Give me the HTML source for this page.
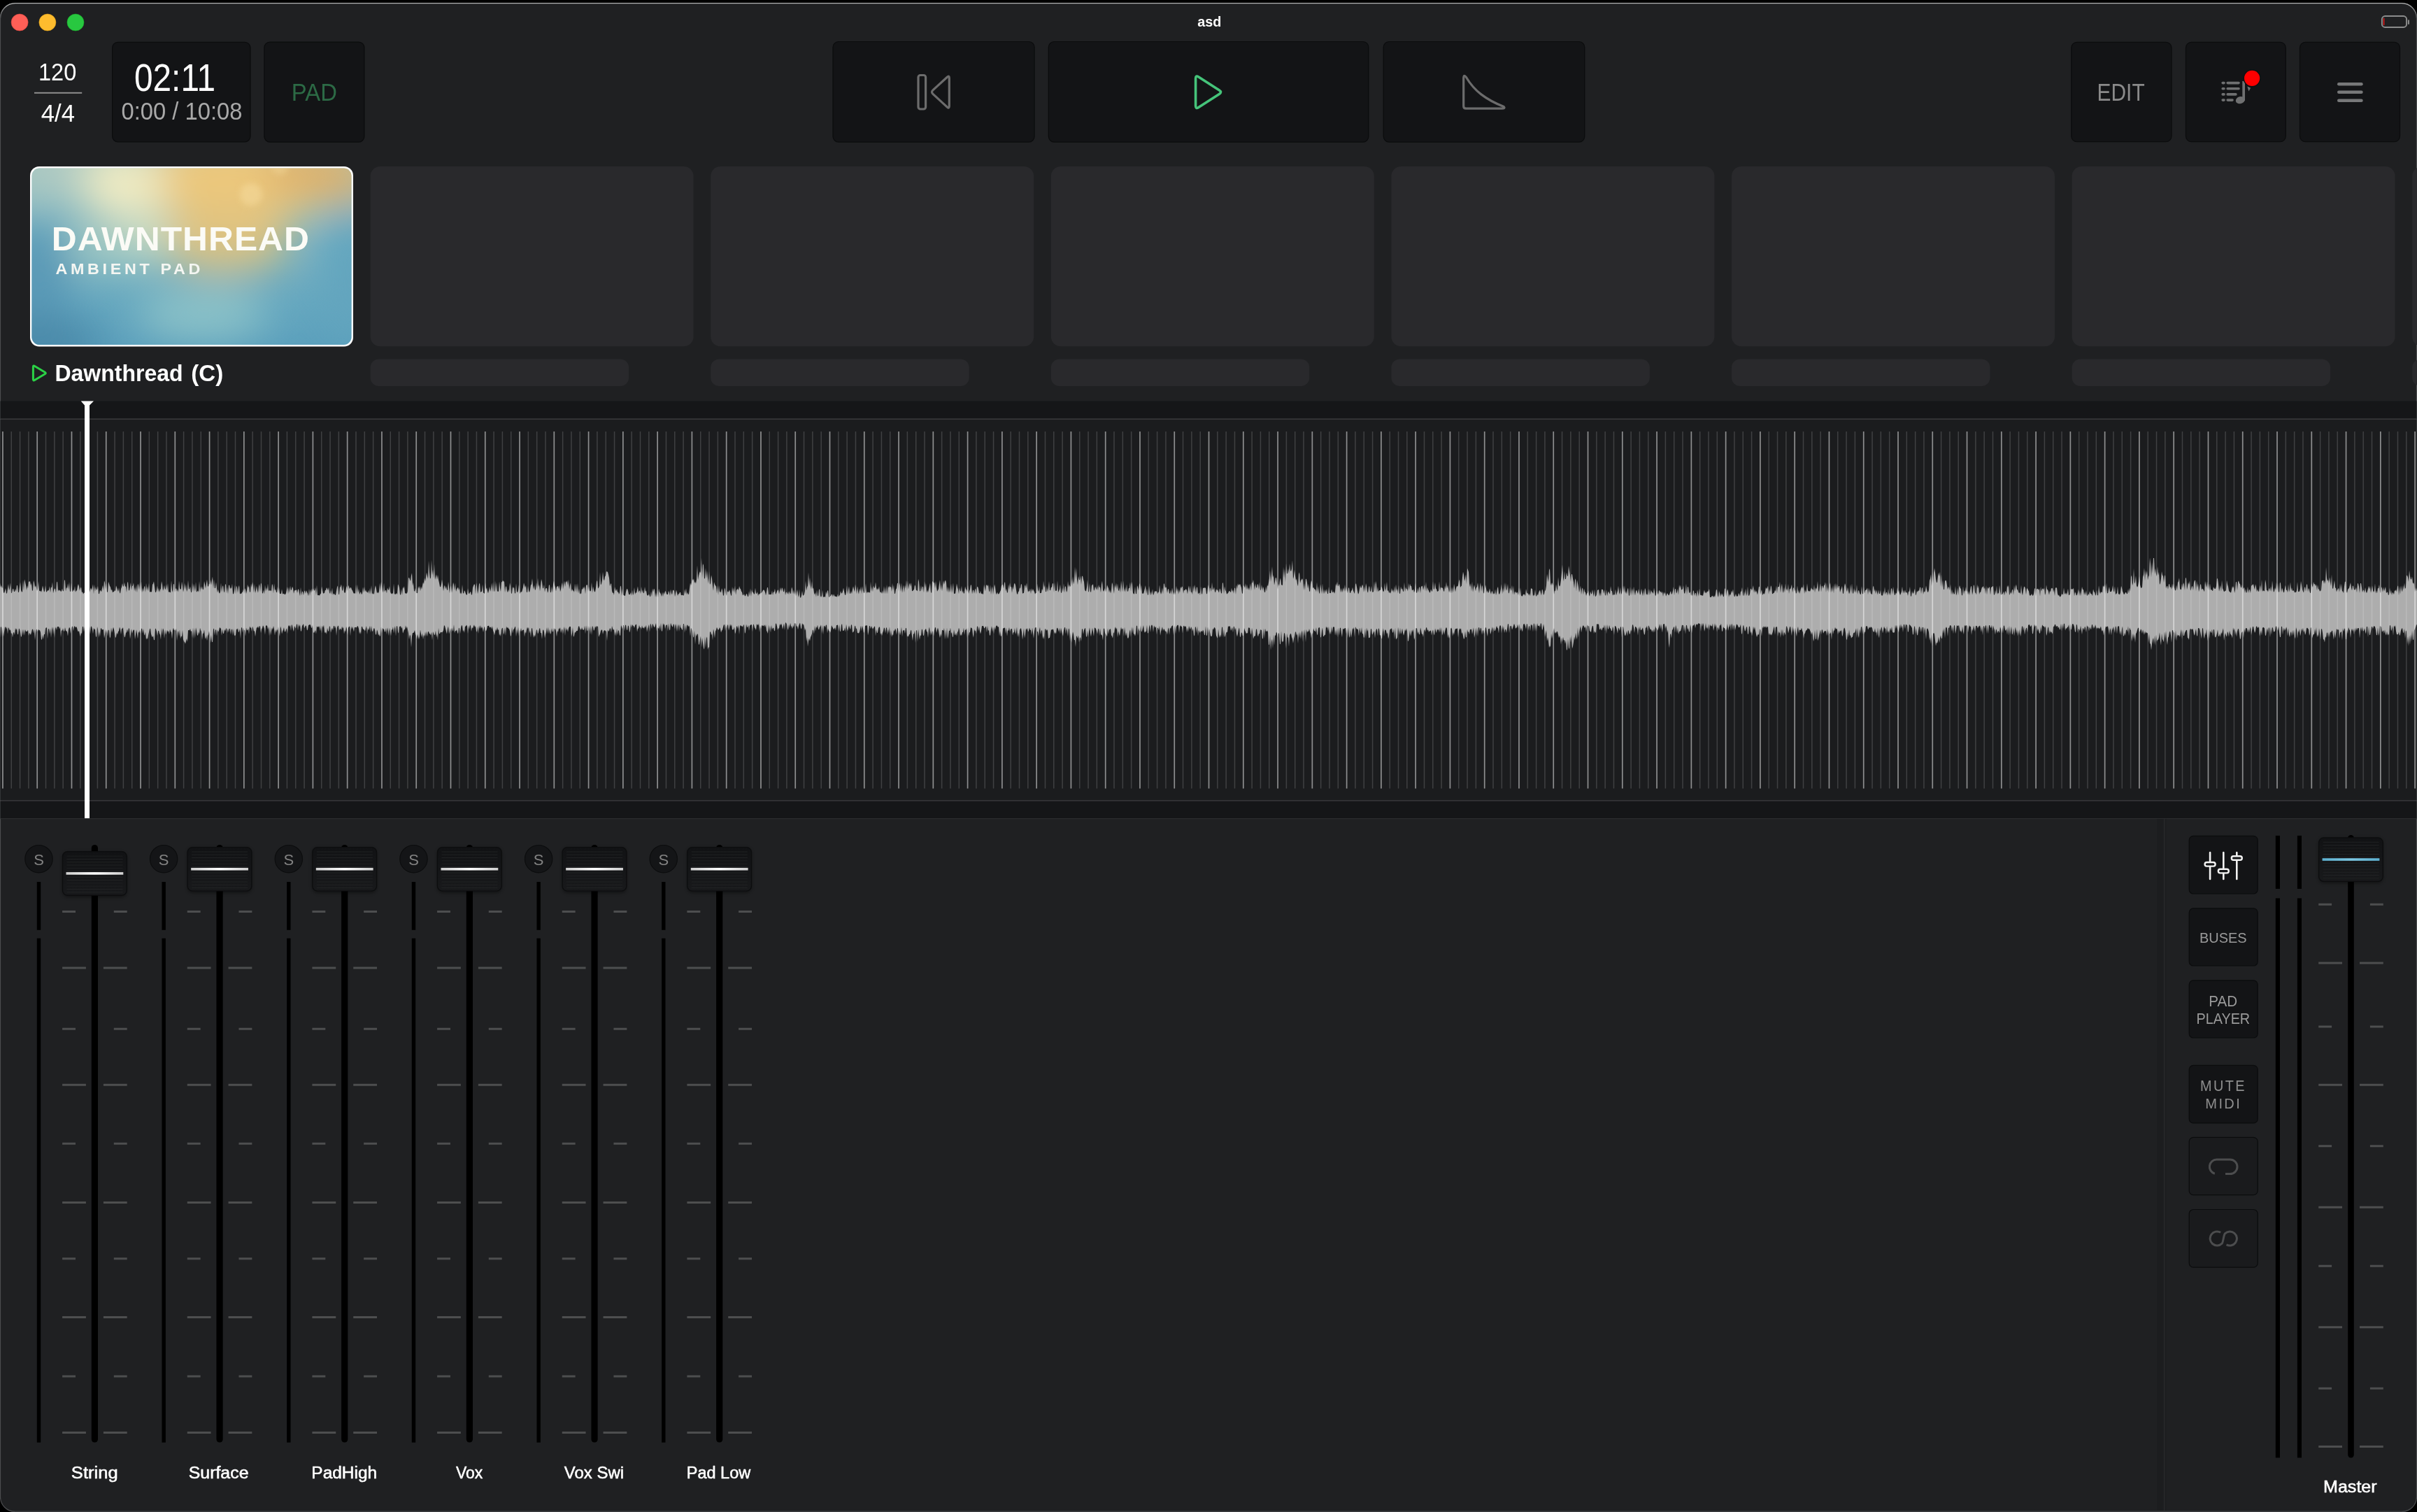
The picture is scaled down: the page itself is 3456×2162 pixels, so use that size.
<!DOCTYPE html><html><head><meta charset="utf-8"><title>asd</title><style>html,body{margin:0;padding:0;background:#000;overflow:hidden;width:3456px;height:2162px}text{font-family:"Liberation Sans",sans-serif}</style></head><body><svg width="3456" height="2162" viewBox="0 0 3456 2162" font-family="Liberation Sans, sans-serif" style="display:block;opacity:0.999"><defs><linearGradient id="edgeg" x1="0" y1="0" x2="0" y2="1"><stop offset="0" stop-color="#b2b3b3"/><stop offset="1" stop-color="#4b4c4e"/></linearGradient><clipPath id="artclip"><rect x="45.5" y="240.5" width="457" height="252.5" rx="11"/></clipPath><filter id="blur30" x="-50%" y="-50%" width="200%" height="200%"><feGaussianBlur stdDeviation="28"/></filter><filter id="blur15" x="-50%" y="-50%" width="200%" height="200%"><feGaussianBlur stdDeviation="14"/></filter><filter id="blur4" x="-50%" y="-50%" width="200%" height="200%"><feGaussianBlur stdDeviation="4"/></filter><filter id="soft" x="-5%" y="-20%" width="110%" height="140%"><feGaussianBlur stdDeviation="0.45"/></filter><linearGradient id="artbase" x1="0" y1="0" x2="0" y2="1"><stop offset="0" stop-color="#a4c6c2"/><stop offset="0.45" stop-color="#72b0c2"/><stop offset="1" stop-color="#5a9fbc"/></linearGradient><linearGradient id="knobg" x1="0" y1="0" x2="0" y2="1"><stop offset="0" stop-color="#111214"/><stop offset="1" stop-color="#18191b"/></linearGradient><filter id="kshadow" x="-20%" y="-30%" width="140%" height="160%"><feGaussianBlur stdDeviation="2.5"/></filter><linearGradient id="wline" x1="0" y1="0" x2="1" y2="0"><stop offset="0" stop-color="#d0d0d0"/><stop offset="0.5" stop-color="#ffffff"/><stop offset="1" stop-color="#d0d0d0"/></linearGradient><linearGradient id="bline" x1="0" y1="0" x2="1" y2="0"><stop offset="0" stop-color="#5cb0d0"/><stop offset="0.5" stop-color="#7cc8e4"/><stop offset="1" stop-color="#5cb0d0"/></linearGradient></defs><rect x="0" y="0" width="3456" height="2162" fill="#000000" />
<rect x="0.5" y="4.5" width="3455" height="2156.9" rx="21" fill="#1f2022" stroke="#4b4c4e" stroke-width="1.2" />
<path d="M0.6 26 A21.4 21.4 0 0 1 22 4.6 H3434 A21.4 21.4 0 0 1 3455.4 26" fill="none" stroke="url(#edgeg)" stroke-width="1.2"/>
<line x1="21" y1="2161.4" x2="3435" y2="2161.4" stroke="#3c3d3f" stroke-width="1.2"/>
<circle cx="28.1" cy="32" r="12" fill="#ff5f57" stroke="#e2463f" stroke-width="0.6"/>
<circle cx="67.9" cy="32" r="12" fill="#febc2e" stroke="#e1a116" stroke-width="0.6"/>
<circle cx="108" cy="32" r="12" fill="#28c840" stroke="#1aab29" stroke-width="0.6"/>
<text transform="translate(1712.2 37.8) scale(1.0148 1)" font-size="19.59" font-weight="bold" fill="#ffffff" >asd</text>
<rect x="3405.9" y="23.1" width="35.2" height="15.8" rx="4.5" fill="none" stroke="#8b8c8c" stroke-width="2"/>
<rect x="3443" y="28.3" width="2" height="6.8" rx="1" fill="#8b8c8c" />
<rect x="3407.9" y="26.1" width="1.4" height="9.9" rx="0.5" fill="#ff1a1a" />
<text transform="translate(54.96 115.4) scale(0.9259 1)" font-size="35.14" font-weight="normal" fill="#ffffff" >120</text>
<rect x="49" y="131.8" width="68.2" height="2" fill="#8e8e8e" />
<text transform="translate(58.81 173.8) scale(0.9874 1)" font-size="35.14" font-weight="normal" fill="#ffffff" >4/4</text>
<rect x="160.6" y="60.3" width="197.4" height="142.5" rx="8" fill="#131416" stroke="#0b0c0d" stroke-width="1.2" />
<text transform="translate(191.99 129.5) scale(0.8642 1)" font-size="55.29" font-weight="normal" fill="#ffffff" >02:11</text>
<text transform="translate(173.59 171) scale(0.9541 1)" font-size="34.29" font-weight="normal" fill="#a9a9a9" >0:00 / 10:08</text>
<rect x="377.9" y="60.1" width="143" height="143" rx="8" fill="#131416" stroke="#0b0c0d" stroke-width="1.2" />
<text transform="translate(416.87 144) scale(0.9439 1)" font-size="34.78" font-weight="normal" fill="#2c6a45" >PAD</text>
<rect x="1191" y="59.5" width="288.1" height="143.6" rx="8" fill="#131416" stroke="#0b0c0d" stroke-width="1.2" />
<rect x="1499.3" y="59.5" width="457.6" height="143.6" rx="8" fill="#131416" stroke="#0b0c0d" stroke-width="1.2" />
<rect x="1978.2" y="59.5" width="287.6" height="143.6" rx="8" fill="#131416" stroke="#0b0c0d" stroke-width="1.2" />
<rect x="1313" y="107.5" width="10.6" height="48.5" rx="3" fill="none" stroke="#6c6c6c" stroke-width="3.2"/>
<path d="M1357.3 111.6Q1357.3 107.6 1354.35 110.3L1333.95 128.9Q1331 131.6 1333.94 134.31L1354.36 153.09Q1357.3 155.8 1357.3 151.8Z" fill="none" stroke="#6c6c6c" stroke-width="3.2" stroke-linejoin="round"/>
<path d="M1713.8 109.92Q1709.6 107.2 1709.6 112.2L1709.6 151.3Q1709.6 156.3 1713.8 153.59L1743.4 134.51Q1747.6 131.8 1743.4 129.08Z" fill="none" stroke="#45c47a" stroke-width="3.6" stroke-linejoin="round"/>
<path d="M2092.7 112 L2092.7 151.8 Q2092.7 155.2 2096 155.2 L2147.5 155.2 Q2152.6 155.2 2150.2 152.6 C2124 142 2108 130 2096.5 110.5 Q2092.7 105.5 2092.7 112 Z" fill="none" stroke="#6c6c6c" stroke-width="3.2" stroke-linejoin="round"/>
<rect x="2961.8" y="60.3" width="143.2" height="142.4" rx="8" fill="#131416" stroke="#0b0c0d" stroke-width="1.2" />
<rect x="3125.5" y="60.3" width="142.8" height="142.4" rx="8" fill="#131416" stroke="#0b0c0d" stroke-width="1.2" />
<rect x="3288.5" y="60.3" width="143" height="142.4" rx="8" fill="#131416" stroke="#0b0c0d" stroke-width="1.2" />
<text transform="translate(2998.61 144.1) scale(0.8417 1)" font-size="35.51" font-weight="normal" fill="#8a8a8a" >EDIT</text>
<line x1="3178.2" y1="118.6" x2="3180" y2="118.6" stroke="#6f7071" stroke-width="3.6" stroke-linecap="round"/>
<line x1="3185.2" y1="118.6" x2="3201" y2="118.6" stroke="#6f7071" stroke-width="3.6" stroke-linecap="round"/>
<line x1="3178.2" y1="126.8" x2="3180" y2="126.8" stroke="#6f7071" stroke-width="3.6" stroke-linecap="round"/>
<line x1="3185.2" y1="126.8" x2="3201" y2="126.8" stroke="#6f7071" stroke-width="3.6" stroke-linecap="round"/>
<line x1="3178.2" y1="134.9" x2="3180" y2="134.9" stroke="#6f7071" stroke-width="3.6" stroke-linecap="round"/>
<line x1="3185.2" y1="134.9" x2="3196.9" y2="134.9" stroke="#6f7071" stroke-width="3.6" stroke-linecap="round"/>
<line x1="3178.2" y1="143.1" x2="3180" y2="143.1" stroke="#6f7071" stroke-width="3.6" stroke-linecap="round"/>
<line x1="3185.2" y1="143.1" x2="3192" y2="143.1" stroke="#6f7071" stroke-width="3.6" stroke-linecap="round"/>
<rect x="3206.3" y="116" width="3.7" height="28" fill="#6f7071"/>
<ellipse cx="3203.3" cy="143.2" rx="6.6" ry="5" transform="rotate(-15 3203.3 143.2)" fill="#6f7071"/>
<path d="M3213.3 123.6 L3218.2 125.8 L3215.4 130.6 Z" fill="#6f7071"/>
<circle cx="3220.1" cy="111.8" r="12.6" fill="#0f1012"/>
<circle cx="3220.1" cy="111.8" r="11.1" fill="#ff0000"/>
<line x1="3344.3" y1="120.2" x2="3376.4" y2="120.2" stroke="#777879" stroke-width="4.6" stroke-linecap="round"/>
<line x1="3344.3" y1="131.7" x2="3376.4" y2="131.7" stroke="#777879" stroke-width="4.6" stroke-linecap="round"/>
<line x1="3344.3" y1="143.7" x2="3376.4" y2="143.7" stroke="#777879" stroke-width="4.6" stroke-linecap="round"/>
<rect x="43" y="238" width="462" height="257.5" rx="13" fill="#ffffff"/>
<g clip-path="url(#artclip)">
<rect x="40" y="235" width="470" height="265" fill="url(#artbase)"/>
<g filter="url(#blur30)">
<ellipse cx="340" cy="255" rx="150" ry="62" fill="#ecc77c"/>
<ellipse cx="450" cy="248" rx="70" ry="42" fill="#dfb26c"/>
<ellipse cx="505" cy="255" rx="30" ry="35" fill="#d8b06e"/>
<ellipse cx="320" cy="345" rx="95" ry="45" fill="#dcc282"/>
<ellipse cx="165" cy="352" rx="70" ry="32" fill="#a6cac2"/>
<ellipse cx="175" cy="262" rx="62" ry="50" fill="#f0ebc2"/>
<ellipse cx="215" cy="335" rx="30" ry="40" fill="#c8dcc4"/>
<ellipse cx="62" cy="248" rx="45" ry="30" fill="#b0cac2"/>
<ellipse cx="55" cy="395" rx="45" ry="75" fill="#5898b6"/>
<ellipse cx="505" cy="390" rx="38" ry="95" fill="#62a4be"/>
<ellipse cx="60" cy="492" rx="85" ry="38" fill="#4a88a8"/>
<ellipse cx="290" cy="448" rx="95" ry="38" fill="#8cc2c8"/>
</g>
<circle cx="359" cy="278" r="16" fill="#f6dc9e" opacity="0.55" filter="url(#blur4)"/>
<circle cx="400" cy="238" r="12" fill="#f6dc9e" opacity="0.4" filter="url(#blur4)"/>
</g>
<text transform="translate(73.77 357.6) scale(1.0400 1)" font-size="47.83" font-weight="bold" fill="#fbfbf6" letter-spacing="0.96" filter="url(#soft)">DAWNTHREAD</text>
<text transform="translate(79.42 392.1) scale(1.0316 1)" font-size="22.61" font-weight="bold" fill="#f4f6f2" letter-spacing="4.52" filter="url(#soft)">AMBIENT PAD</text>
<rect x="529.6" y="238" width="462" height="257.3" rx="14" fill="#29292c" />
<rect x="529.6" y="513.6" width="369.5" height="38.4" rx="12" fill="#29292c" />
<rect x="1016.2" y="238" width="462" height="257.3" rx="14" fill="#29292c" />
<rect x="1016.2" y="513.6" width="369.5" height="38.4" rx="12" fill="#29292c" />
<rect x="1502.8" y="238" width="462" height="257.3" rx="14" fill="#29292c" />
<rect x="1502.8" y="513.6" width="369.5" height="38.4" rx="12" fill="#29292c" />
<rect x="1989.4" y="238" width="462" height="257.3" rx="14" fill="#29292c" />
<rect x="1989.4" y="513.6" width="369.5" height="38.4" rx="12" fill="#29292c" />
<rect x="2476" y="238" width="462" height="257.3" rx="14" fill="#29292c" />
<rect x="2476" y="513.6" width="369.5" height="38.4" rx="12" fill="#29292c" />
<rect x="2962.6" y="238" width="462" height="257.3" rx="14" fill="#29292c" />
<rect x="2962.6" y="513.6" width="369.5" height="38.4" rx="12" fill="#29292c" />
<rect x="3449.2" y="238" width="462" height="257.3" rx="14" fill="#29292c" />
<rect x="3449.2" y="513.6" width="369.5" height="38.4" rx="12" fill="#29292c" />
<path d="M49.55 523.48Q47.4 522.2 47.4 524.7L47.4 542.3Q47.4 544.8 49.55 543.52L64.25 534.78Q66.4 533.5 64.25 532.22Z" fill="none" stroke="#2bd146" stroke-width="3" stroke-linejoin="round"/>
<text transform="translate(78.42 545) scale(0.9481 1)" font-size="33.79" font-weight="bold" fill="#ffffff" >Dawnthread</text>
<text transform="translate(273.24 545) scale(0.9795 1)" font-size="33.79" font-weight="bold" fill="#ffffff" >(C)</text>
<rect x="0.5" y="573.5" width="3455" height="25.5" fill="#151618" />
<rect x="0.5" y="598.6" width="3455" height="1.2" fill="#4a4b4c" />
<rect x="0.5" y="599.8" width="3455" height="544.6" fill="#1b1c1e" />
<path d="M0 833.43L0 833.43L1 839.95L2 836.66L3 840.95L4 839.49L5 846.76L6 848.24L7 844.93L8 841.12L9 848.42L10 848.59L11 841.84L12 835.01L13 844.25L14 841.1L15 833.15L16 848.28L17 847.53L18 842.49L19 841.45L20 846.03L21 846.03L22 841.77L23 846.02L24 836.79L25 837.15L26 847.01L27 846.83L28 839.24L29 832.24L30 843.8L31 846.59L32 846.34L33 829.24L34 844.55L35 828.2L36 832.29L37 836.99L38 843.92L39 836.98L40 841.46L41 831.33L42 831.98L43 830.64L44 837.14L45 833.59L46 845.01L47 844.01L48 829.69L49 833.29L50 839.99L51 836.95L52 840.31L53 845.03L54 842.21L55 831.03L56 844.3L57 845.52L58 844.85L59 846.73L60 843.28L61 837.21L62 841.87L63 846.82L64 845.08L65 837.05L66 846.46L67 846.27L68 844.03L69 844.74L70 843.17L71 837.97L72 847.53L73 839.56L74 840.22L75 832.23L76 848.27L77 844.22L78 841.61L79 841.98L80 847.48L81 832.85L82 831.52L83 845.4L84 842.91L85 844.76L86 843.81L87 846.26L88 844.95L89 841.56L90 845.42L91 845.1L92 828.76L93 830.5L94 845.42L95 839.41L96 841.52L97 834.21L98 842.89L99 832.05L100 845.55L101 846L102 833.27L103 846.19L104 845.25L105 842.82L106 845.82L107 838.06L108 846.85L109 844.85L110 844.35L111 838.11L112 834.93L113 838.4L114 844.75L115 840.98L116 839.58L117 847.53L118 846.09L119 849.43L120 847.78L121 847.54L122 839.26L123 849.72L124 849.21L125 837.2L126 842.51L127 845.69L128 847.11L129 843.04L130 840.2L131 844.02L132 840.56L133 835.32L134 849.28L135 835.81L136 845.51L137 839.12L138 843.72L139 842.44L140 837.66L141 849.14L142 849.04L143 843.68L144 844.86L145 846.18L146 841.2L147 836.72L148 844.2L149 829.9L150 833.19L151 842.75L152 833.35L153 846.79L154 846.52L155 831.87L156 834.86L157 837.91L158 839.56L159 844.41L160 842.41L161 847.38L162 846.04L163 846.3L164 843.95L165 845.32L166 837.28L167 840.09L168 843.19L169 845.97L170 840.27L171 846.91L172 848.73L173 842.02L174 839.17L175 833.94L176 838.92L177 837.96L178 832.82L179 839.18L180 837.92L181 846.95L182 833.83L183 831.61L184 844.2L185 844.16L186 839.12L187 832.83L188 843.98L189 838.08L190 837.42L191 833.14L192 845L193 839.37L194 846.61L195 836.09L196 847.42L197 834.54L198 837.06L199 843.2L200 832.73L201 845.42L202 830.96L203 847.53L204 840.47L205 846.29L206 839.67L207 837.51L208 847.11L209 833.87L210 844.36L211 838.3L212 845.47L213 833.52L214 846.67L215 846.19L216 846.23L217 846.62L218 836.07L219 834.41L220 831.24L221 838.64L222 846.67L223 846.93L224 843.44L225 837.49L226 846.87L227 840.47L228 846.67L229 843.55L230 841.47L231 830.98L232 835.81L233 844.8L234 841.86L235 836.42L236 843.56L237 841.54L238 835.22L239 844.88L240 833.75L241 847.28L242 845.65L243 847.17L244 847.03L245 830.11L246 843.57L247 847.07L248 834.72L249 835.79L250 847.35L251 842.22L252 841.08L253 845.67L254 842.31L255 846.78L256 830.31L257 840.89L258 842.89L259 842.12L260 831.45L261 838.04L262 846.81L263 842.45L264 833.54L265 843.13L266 835.46L267 846.25L268 842.65L269 829.51L270 842.86L271 842.11L272 838.23L273 846.54L274 847.36L275 832.87L276 846.43L277 834.79L278 840.07L279 846.06L280 832.01L281 846.64L282 845.7L283 844.16L284 846.85L285 830.64L286 847.04L287 838.24L288 843.01L289 838.3L290 843.45L291 842.18L292 831.01L293 835.73L294 841.23L295 834.5L296 828.66L297 838.55L298 838.44L299 834.36L300 835.88L301 828.44L302 836.63L303 829.88L304 824.6L305 841.75L306 828.62L307 841.36L308 840.66L309 832.13L310 841.36L311 847.62L312 843.05L313 847.35L314 848.65L315 845.93L316 833.23L317 847L318 838.91L319 836.92L320 845.56L321 847.47L322 835.86L323 835.37L324 848.58L325 839.11L326 849.29L327 837.26L328 836.17L329 842.34L330 839.7L331 841.98L332 834.46L333 849.33L334 849.22L335 844.94L336 836.21L337 849.53L338 837.56L339 839.68L340 847.66L341 839.83L342 836.69L343 849.42L344 848.46L345 849.14L346 847.34L347 846.21L348 842.16L349 849.35L350 841.11L351 843.15L352 848.89L353 844.19L354 835.41L355 840.58L356 837.68L357 846.46L358 846.72L359 834.42L360 840.24L361 832.28L362 836.83L363 847.65L364 834.83L365 847.89L366 844.29L367 837.74L368 844.02L369 847.83L370 838.29L371 834.88L372 846.19L373 833.58L374 835.11L375 848.85L376 848.02L377 843.3L378 849.57L379 836.14L380 845.68L381 839.79L382 844.15L383 834.21L384 845.49L385 843.41L386 845.35L387 843.77L388 845.8L389 834.83L390 837.32L391 848.4L392 834.02L393 844.51L394 842.17L395 846.81L396 847.18L397 838.43L398 848.5L399 840.02L400 848.91L401 848.79L402 849.22L403 842.18L404 848.96L405 849.56L406 848.41L407 850.18L408 849.95L409 847.95L410 843.32L411 838.71L412 849.17L413 839.15L414 847.76L415 837.39L416 844.31L417 843.12L418 838.8L419 840.96L420 848.67L421 844.72L422 843.81L423 844.3L424 842.79L425 848.09L426 843.06L427 842.21L428 847.65L429 852.36L430 839.47L431 851.46L432 845.87L433 845.99L434 851.14L435 845.79L436 844.18L437 849.1L438 844.13L439 846.45L440 848.65L441 852.24L442 841.4L443 851.99L444 842.49L445 847.65L446 841.32L447 846.34L448 841.12L449 844.33L450 844.42L451 839.63L452 851.23L453 836.47L454 851.13L455 851L456 851.14L457 851.54L458 849.47L459 848.45L460 838.16L461 843.76L462 848.49L463 848.45L464 847.82L465 843.82L466 843.95L467 840.1L468 841.65L469 844.17L470 839.6L471 847.62L472 849.12L473 843.51L474 850.46L475 840.19L476 851.1L477 848.46L478 849.33L479 850.64L480 850.83L481 845.28L482 839.53L483 837.2L484 849.85L485 850.23L486 840.02L487 838.65L488 835.54L489 843.38L490 844.95L491 836.71L492 846.34L493 848.29L494 846.86L495 840.76L496 837.72L497 845.32L498 836.55L499 838.93L500 842.26L501 840.02L502 840.32L503 842.94L504 844.38L505 846.99L506 849.08L507 847.81L508 849.34L509 835.52L510 849.63L511 835.62L512 847.39L513 841.8L514 850.01L515 847.82L516 846.1L517 850.36L518 848.45L519 839.18L520 847.71L521 838.67L522 846.19L523 843.36L524 846.51L525 846.28L526 848.08L527 843.41L528 849.39L529 840.7L530 849.79L531 836.67L532 849.82L533 847.88L534 849.85L535 848.95L536 840.71L537 836.99L538 841.88L539 848.32L540 846.57L541 848.61L542 845.58L543 833.61L544 845.04L545 831.87L546 837.98L547 843.7L548 847.5L549 833.32L550 846.62L551 844.04L552 843.82L553 848.62L554 840.16L555 843.39L556 843.46L557 838.06L558 846.38L559 848.55L560 849.47L561 847.7L562 849.76L563 834.32L564 848.72L565 850.19L566 849.25L567 848.05L568 850.36L569 835.25L570 837.19L571 840.38L572 849.96L573 850.71L574 841.91L575 850.99L576 839.3L577 841.87L578 837.92L579 847.7L580 848.71L581 848.38L582 848.6L583 845.53L584 826.74L585 825.66L586 828.68L587 831.03L588 823.33L589 819.25L590 837.79L591 832.74L592 844.95L593 845.79L594 840.65L595 847.67L596 848.03L597 848.26L598 838.31L599 841.8L600 837.79L601 845.24L602 838.58L603 842.71L604 837.84L605 832.31L606 835.31L607 826.04L608 831.6L609 825.96L610 818.58L611 823.19L612 827.85L613 801.67L614 818.03L615 827.74L616 825.96L617 800.52L618 822.28L619 814.26L620 826.91L621 806.18L622 828.93L623 824.94L624 821.23L625 828.86L626 822.12L627 829.01L628 833.58L629 838.71L630 839.38L631 835.49L632 828.54L633 835.49L634 845.14L635 839.08L636 836.6L637 842.5L638 838.08L639 843.36L640 843.9L641 831.82L642 838.69L643 848.27L644 840.02L645 836.94L646 847.78L647 840.75L648 832.72L649 836.06L650 844.33L651 833.27L652 845.89L653 842.79L654 840.88L655 839.44L656 843.93L657 841.02L658 849.42L659 847.11L660 849.76L661 835.85L662 847.88L663 848.71L664 844.14L665 845.87L666 848.97L667 850.87L668 850.26L669 841.12L670 848.3L671 849.14L672 846.71L673 845.98L674 850.41L675 850.42L676 840.37L677 837.51L678 835.28L679 836.09L680 849.43L681 833.06L682 838.99L683 849.14L684 844.35L685 835.28L686 833.59L687 847.37L688 845.94L689 845.81L690 835.62L691 847.55L692 848.08L693 849.12L694 832.97L695 843.21L696 839.99L697 845.23L698 848.33L699 844.09L700 838.64L701 845.99L702 841.78L703 833.45L704 846.87L705 831.91L706 844.28L707 846.57L708 830.06L709 846.39L710 832.62L711 844.98L712 846.27L713 845.33L714 831.18L715 840.78L716 846.04L717 832.47L718 832.12L719 829.74L720 831.56L721 831.54L722 847.36L723 838.87L724 838.53L725 844.92L726 847.24L727 842.46L728 846.47L729 833.13L730 838.09L731 848.8L732 848.56L733 838.75L734 841.47L735 839.31L736 848L737 848.73L738 834.02L739 846.23L740 847.17L741 844.01L742 835.79L743 849.19L744 847.8L745 846L746 846.68L747 843.48L748 839.87L749 833.36L750 836.97L751 840.48L752 836.47L753 846.78L754 846.89L755 837.8L756 845.23L757 846.9L758 843.09L759 836.41L760 835.39L761 827.1L762 837.46L763 842.65L764 836.28L765 844.14L766 842.22L767 832.83L768 842.56L769 826.15L770 839.31L771 835.51L772 845.24L773 837.83L774 827.99L775 831.98L776 840.67L777 841.5L778 835.65L779 846.86L780 841.41L781 841.28L782 840.96L783 847.63L784 845.23L785 835.95L786 837.05L787 847.47L788 846.55L789 838.15L790 847.81L791 835.59L792 830.28L793 836.62L794 839.78L795 845.41L796 838.83L797 838.73L798 837.51L799 842.21L800 836.45L801 846.27L802 842.67L803 836.7L804 832.64L805 842.61L806 836.01L807 830.58L808 839.24L809 831L810 833.05L811 829.7L812 836.88L813 828.52L814 842.72L815 837.06L816 833.24L817 846.04L818 841.68L819 844.49L820 844.38L821 846.89L822 834.28L823 846.49L824 834.36L825 847.44L826 833.66L827 848.51L828 841.66L829 849.63L830 847.94L831 849.68L832 841.42L833 843.2L834 838.91L835 842.01L836 837.99L837 849.23L838 837.54L839 835.99L840 836.78L841 845.99L842 838.62L843 844.29L844 845.83L845 844.16L846 832.53L847 847.73L848 838.42L849 843.3L850 846.08L851 846.56L852 840.78L853 831.71L854 829.8L855 841.5L856 840.43L857 837.78L858 818.09L859 836.54L860 834.71L861 829.67L862 817.78L863 828.02L864 830.46L865 824.5L866 823.37L867 817.21L868 817.17L869 818.01L870 821.69L871 826.52L872 838.13L873 835.31L874 834.11L875 845L876 848.1L877 847.47L878 851.08L879 838.97L880 843.5L881 845.16L882 841.7L883 847.08L884 846.25L885 849.75L886 847.4L887 837.61L888 838.85L889 852.02L890 841.76L891 850.79L892 850.96L893 851.97L894 851.68L895 846.29L896 842.5L897 841.76L898 844.76L899 849.73L900 850.24L901 849.78L902 846.82L903 852.04L904 843.51L905 851.27L906 848.48L907 839.65L908 850.16L909 846.79L910 848.16L911 843.54L912 838.13L913 847.45L914 844.56L915 844.68L916 849.28L917 838.69L918 847.87L919 843.2L920 848.57L921 847.39L922 839.01L923 846.02L924 844.17L925 850.61L926 851.81L927 851.13L928 849.17L929 852.45L930 853.46L931 845.53L932 852.95L933 841.37L934 846.73L935 841.42L936 843.61L937 853.94L938 847.14L939 854.15L940 843.01L941 854.13L942 841.47L943 846.52L944 847.78L945 849.66L946 853.32L947 846.23L948 853.2L949 846.58L950 849.91L951 845.17L952 845.87L953 849.61L954 850.02L955 850.03L956 844.8L957 847.17L958 851.75L959 842.38L960 848.09L961 850.41L962 844.1L963 843.57L964 845.29L965 853.43L966 848.9L967 843.44L968 847.34L969 852.05L970 849.23L971 849.36L972 846.74L973 846.89L974 851.28L975 851.09L976 850.81L977 851.66L978 851.12L979 842.13L980 849.51L981 840.96L982 850.59L983 846.73L984 849.67L985 849.64L986 841.87L987 833.17L988 837.33L989 833.13L990 827.65L991 830.23L992 827.37L993 834.11L994 831.41L995 834.61L996 828.75L997 808.18L998 829.36L999 823.59L1000 819.38L1001 816.7L1002 819.66L1003 797.44L1004 826.5L1005 806.02L1006 808.23L1007 827.32L1008 827.24L1009 811.89L1010 827.41L1011 815.8L1012 826.85L1013 834.69L1014 816.47L1015 836.1L1016 833.97L1017 822.13L1018 826.95L1019 837.62L1020 844.74L1021 832.17L1022 835.62L1023 837.2L1024 838.83L1025 848.56L1026 836.83L1027 851.01L1028 836.75L1029 847.14L1030 845.23L1031 847.84L1032 840.89L1033 844.31L1034 851.79L1035 851.21L1036 840.16L1037 842.99L1038 849.73L1039 852.11L1040 844.95L1041 846.78L1042 845.71L1043 843.29L1044 846.87L1045 850.82L1046 852.17L1047 838.8L1048 846.27L1049 840.18L1050 847.91L1051 837.33L1052 850.63L1053 843.78L1054 842.65L1055 841.53L1056 844.55L1057 838.08L1058 841.27L1059 842.19L1060 845.59L1061 847L1062 851.45L1063 850.39L1064 849.59L1065 852.24L1066 852.34L1067 849.16L1068 849.24L1069 852.86L1070 853.13L1071 845.35L1072 852.51L1073 841.05L1074 853.09L1075 842.94L1076 846.61L1077 847.32L1078 849.41L1079 849.39L1080 840.52L1081 848.86L1082 848.79L1083 846.08L1084 852.02L1085 848.71L1086 850.17L1087 847.96L1088 848.52L1089 847.61L1090 846.12L1091 844.04L1092 843.32L1093 844.3L1094 846.64L1095 851.17L1096 846.64L1097 839.96L1098 839.95L1099 849.66L1100 850.13L1101 849.75L1102 850.25L1103 849.77L1104 844.59L1105 851.28L1106 846.2L1107 846.73L1108 841.45L1109 849.88L1110 848.35L1111 845.8L1112 843.5L1113 843.46L1114 849.49L1115 844.6L1116 839.74L1117 845.98L1118 840.05L1119 841.72L1120 845.71L1121 846.52L1122 840.29L1123 850.91L1124 846.5L1125 847.09L1126 849.73L1127 845.16L1128 850.56L1129 845.09L1130 848.37L1131 849.23L1132 839.2L1133 842.21L1134 849.56L1135 843.2L1136 850.49L1137 845.76L1138 852.45L1139 847.08L1140 842.77L1141 850.52L1142 854.1L1143 842.36L1144 854.16L1145 854.72L1146 851.56L1147 844.69L1148 851.81L1149 851.3L1150 849.97L1151 845.34L1152 830.49L1153 844.47L1154 839.95L1155 837.35L1156 818.17L1157 838.24L1158 825.8L1159 837.68L1160 842.44L1161 830.75L1162 842.18L1163 840.07L1164 847.98L1165 850.5L1166 846.72L1167 853.81L1168 843.55L1169 851.33L1170 852.69L1171 843.35L1172 842.27L1173 854.24L1174 851.81L1175 854.13L1176 843.53L1177 854.07L1178 853.55L1179 853.06L1180 854.19L1181 845.58L1182 850.03L1183 845.31L1184 843.66L1185 853.58L1186 853.95L1187 852.22L1188 852.35L1189 849.84L1190 849.88L1191 853.39L1192 849.26L1193 851.69L1194 853.01L1195 852.63L1196 853.02L1197 853.74L1198 848.95L1199 853.38L1200 851.67L1201 850.52L1202 845.01L1203 848.16L1204 848.61L1205 845.46L1206 840.62L1207 845.5L1208 850.33L1209 851.27L1210 846.77L1211 837.03L1212 849.99L1213 843.76L1214 838.15L1215 848.43L1216 848.96L1217 845.09L1218 849.21L1219 842.9L1220 838.14L1221 842.79L1222 846.56L1223 835.36L1224 841.65L1225 849.27L1226 838.15L1227 845.59L1228 849.67L1229 841.23L1230 845.65L1231 838.58L1232 849.33L1233 837.91L1234 844.71L1235 847.93L1236 847.96L1237 845.87L1238 834.12L1239 848.76L1240 845.77L1241 847.77L1242 846.46L1243 846.68L1244 847.93L1245 831.51L1246 845.73L1247 838.85L1248 846.36L1249 837.21L1250 840.49L1251 840.61L1252 832.2L1253 840.56L1254 843.98L1255 840.91L1256 843.61L1257 838.31L1258 845.6L1259 847.47L1260 846.38L1261 848.99L1262 844.35L1263 848.92L1264 837.77L1265 849.2L1266 838.96L1267 849.48L1268 835.67L1269 849.42L1270 838L1271 840.69L1272 837.6L1273 839.96L1274 838.64L1275 846.03L1276 833.68L1277 844.19L1278 836.5L1279 848.88L1280 848.81L1281 842.77L1282 841.21L1283 834.12L1284 833.85L1285 846.03L1286 832.97L1287 837.27L1288 846.11L1289 833.32L1290 847.86L1291 841.38L1292 836.15L1293 847.15L1294 836.29L1295 841.65L1296 829.32L1297 844.59L1298 830.14L1299 842.45L1300 836.38L1301 833.14L1302 838.69L1303 832.76L1304 844.95L1305 845.13L1306 843.8L1307 842.91L1308 836.21L1309 837.88L1310 844.36L1311 843.99L1312 845.53L1313 827.83L1314 831.84L1315 844.63L1316 845.78L1317 836.87L1318 845.02L1319 838.43L1320 839.27L1321 847.42L1322 830.67L1323 840.66L1324 833.87L1325 847.74L1326 843.6L1327 847.06L1328 842.25L1329 837.93L1330 833.61L1331 846.5L1332 848.24L1333 831.69L1334 831.3L1335 833.95L1336 832.13L1337 841.46L1338 830.73L1339 839.46L1340 845.7L1341 843.93L1342 842.14L1343 835.28L1344 828.93L1345 843.9L1346 835.54L1347 845.19L1348 837.47L1349 829.95L1350 835.65L1351 831.01L1352 829.49L1353 833.48L1354 846.76L1355 838.32L1356 847.73L1357 839.13L1358 847.54L1359 842.94L1360 834.48L1361 847.97L1362 841.77L1363 833.18L1364 849.18L1365 848.53L1366 849.05L1367 841.8L1368 834.37L1369 839.4L1370 843.12L1371 849.32L1372 840.35L1373 844.8L1374 845.82L1375 837.85L1376 847.81L1377 844.59L1378 849.12L1379 847.74L1380 838.44L1381 842.2L1382 843.5L1383 846.61L1384 836.23L1385 849.09L1386 845.25L1387 842.5L1388 835.95L1389 837.11L1390 849.57L1391 844.33L1392 843.22L1393 848.86L1394 843.46L1395 841.16L1396 849.72L1397 839.21L1398 838.87L1399 841.68L1400 848.06L1401 848.58L1402 844.68L1403 849.53L1404 848.19L1405 849.48L1406 849.76L1407 835.7L1408 840.72L1409 845.41L1410 836.63L1411 836.31L1412 838.6L1413 835.75L1414 844.42L1415 846.65L1416 836.01L1417 850.24L1418 842.24L1419 838.15L1420 850.36L1421 842.55L1422 835.46L1423 839.17L1424 847.65L1425 850.19L1426 846.47L1427 849.17L1428 849.62L1429 848.32L1430 845.89L1431 843.74L1432 837.6L1433 836.21L1434 835.8L1435 841.48L1436 833.97L1437 831.75L1438 845.5L1439 841.43L1440 847.72L1441 846.93L1442 835.4L1443 843.11L1444 833.06L1445 839.62L1446 838.86L1447 847.76L1448 838.21L1449 843.48L1450 834.64L1451 833.89L1452 836.73L1453 843.35L1454 849.12L1455 849.91L1456 846.24L1457 845.49L1458 839.91L1459 841.86L1460 834.96L1461 835.67L1462 848.85L1463 848.35L1464 847.67L1465 838.32L1466 835.93L1467 841.46L1468 833.23L1469 841.54L1470 846.92L1471 844.58L1472 846.02L1473 841.45L1474 849.08L1475 841.03L1476 845.64L1477 841.98L1478 844.61L1479 846.33L1480 849.39L1481 848.09L1482 848.11L1483 834.34L1484 843.4L1485 846.33L1486 837.91L1487 848.15L1488 847.91L1489 847.72L1490 841.42L1491 844.86L1492 830.6L1493 840.4L1494 836.62L1495 846.01L1496 846.19L1497 838.3L1498 846.19L1499 841.19L1500 831.09L1501 844.32L1502 844.07L1503 839.78L1504 839.74L1505 833.98L1506 834.52L1507 846.92L1508 832.31L1509 845.22L1510 844.31L1511 845.08L1512 830.06L1513 847.09L1514 844.96L1515 842.46L1516 835.43L1517 847.19L1518 847.89L1519 840.19L1520 846.77L1521 833.99L1522 847.78L1523 837.88L1524 839.35L1525 847.04L1526 844.47L1527 830.72L1528 840.11L1529 835.61L1530 839.13L1531 837.71L1532 827.04L1533 837.94L1534 824.12L1535 835.54L1536 830.94L1537 810.16L1538 828.44L1539 812.11L1540 828.5L1541 836.35L1542 823.8L1543 829.06L1544 829.48L1545 823.1L1546 836.11L1547 824.06L1548 823.62L1549 828.41L1550 832.01L1551 842.96L1552 845.28L1553 845.15L1554 839.68L1555 828.89L1556 845.85L1557 846.64L1558 833.78L1559 845.43L1560 847.34L1561 837L1562 836.55L1563 835.11L1564 844.65L1565 843.35L1566 838.46L1567 841.19L1568 843.82L1569 838.12L1570 844.58L1571 836.08L1572 840.34L1573 839.36L1574 847.38L1575 835.71L1576 830.52L1577 843.23L1578 845.99L1579 843.92L1580 840.81L1581 846.75L1582 842.88L1583 836.3L1584 838.92L1585 841.36L1586 847.28L1587 842.71L1588 848.5L1589 844.88L1590 832.87L1591 835.48L1592 843.45L1593 848.94L1594 836.22L1595 841.01L1596 833.13L1597 843.38L1598 834.26L1599 843.71L1600 845.37L1601 839.35L1602 847.38L1603 830.24L1604 838.66L1605 846.47L1606 829.93L1607 841.44L1608 846.42L1609 838.91L1610 846.95L1611 835.36L1612 845.42L1613 845.86L1614 840.84L1615 841.23L1616 832.37L1617 845.68L1618 831.82L1619 835.75L1620 847.8L1621 849.27L1622 849.42L1623 838.41L1624 849.12L1625 849.28L1626 837.1L1627 839.57L1628 844.5L1629 835.99L1630 833.83L1631 845.26L1632 836.35L1633 849.2L1634 848.03L1635 849.28L1636 845.57L1637 841.3L1638 837.08L1639 849.02L1640 841.49L1641 851L1642 850.27L1643 837.57L1644 846.12L1645 851.39L1646 844.88L1647 850.65L1648 841.93L1649 851.36L1650 849.04L1651 845.22L1652 845.74L1653 845.31L1654 845.8L1655 849.47L1656 846.09L1657 847.66L1658 836.26L1659 845.85L1660 850.09L1661 846.76L1662 840.26L1663 849.6L1664 833.91L1665 835.14L1666 840.93L1667 839.04L1668 840.79L1669 847.9L1670 842.42L1671 842.08L1672 848.25L1673 848.66L1674 843.25L1675 849.89L1676 840.13L1677 845.69L1678 850.44L1679 846.73L1680 850.79L1681 845.95L1682 837.82L1683 846.42L1684 840.63L1685 849.63L1686 842.92L1687 847.83L1688 838.79L1689 841.84L1690 838.56L1691 839.16L1692 848.76L1693 843.67L1694 844.53L1695 842.7L1696 842.13L1697 844.15L1698 849.61L1699 841.29L1700 837.31L1701 846.86L1702 837.38L1703 847.66L1704 846.01L1705 850.3L1706 837.35L1707 846.02L1708 835.94L1709 840.77L1710 847.55L1711 839.82L1712 839.59L1713 849.44L1714 848.24L1715 847.15L1716 851.15L1717 838.29L1718 848.51L1719 850.01L1720 840.44L1721 841.11L1722 840.43L1723 840.31L1724 840.98L1725 848.74L1726 849.4L1727 839.91L1728 835.73L1729 847.67L1730 839.9L1731 841.65L1732 845.89L1733 832.38L1734 843.83L1735 842.62L1736 839.24L1737 845.8L1738 847.61L1739 841.79L1740 844.71L1741 842.75L1742 845.47L1743 847.61L1744 841.33L1745 843.27L1746 847.96L1747 848.78L1748 832.89L1749 833.92L1750 849.23L1751 838.33L1752 843.63L1753 845.7L1754 849.67L1755 848.65L1756 847.95L1757 845.71L1758 844.84L1759 846.08L1760 847.17L1761 840.54L1762 846.24L1763 843.17L1764 848.69L1765 841.3L1766 840.16L1767 849.89L1768 836L1769 842.05L1770 834.19L1771 836.96L1772 836.28L1773 834.84L1774 837.61L1775 840.42L1776 848.65L1777 848.62L1778 836.81L1779 838L1780 840.64L1781 833.94L1782 843.53L1783 835.55L1784 843.52L1785 839.5L1786 844.34L1787 839.98L1788 833.89L1789 845.05L1790 832.65L1791 833.73L1792 828.98L1793 836.16L1794 843.73L1795 834L1796 839.55L1797 840.9L1798 835.09L1799 836.19L1800 842.74L1801 832.18L1802 844.53L1803 842.99L1804 835.91L1805 844.83L1806 838.83L1807 842L1808 846.66L1809 846.96L1810 838.46L1811 845.7L1812 836.18L1813 838.48L1814 832.83L1815 827.03L1816 815.53L1817 832.05L1818 822.63L1819 810.07L1820 826.01L1821 822.34L1822 836.77L1823 831.66L1824 825.79L1825 826.54L1826 833.49L1827 842.64L1828 834.72L1829 838.1L1830 830.11L1831 826.29L1832 835.7L1833 836.99L1834 836.5L1835 810.47L1836 826.25L1837 812.68L1838 832.38L1839 805.52L1840 819.89L1841 820.3L1842 812.77L1843 820.57L1844 805.63L1845 815.61L1846 817.29L1847 813.22L1848 801.25L1849 828.02L1850 824.19L1851 814.64L1852 823.1L1853 830.36L1854 827.3L1855 835.03L1856 838.36L1857 820.92L1858 818.3L1859 834.06L1860 830.19L1861 828.66L1862 826.98L1863 829.99L1864 844.15L1865 833.9L1866 843.88L1867 827.52L1868 828.3L1869 833.17L1870 841.58L1871 834.71L1872 844.91L1873 846.13L1874 835.61L1875 829.8L1876 832.28L1877 841.45L1878 839.46L1879 841.58L1880 842.86L1881 842.89L1882 846.19L1883 832.35L1884 846.92L1885 837.97L1886 847.07L1887 849.32L1888 835.28L1889 841.6L1890 849.36L1891 834L1892 849.52L1893 842.19L1894 849.26L1895 842.68L1896 847.03L1897 841.75L1898 848.73L1899 849.2L1900 838.65L1901 848.34L1902 847.72L1903 848.26L1904 842.39L1905 846.33L1906 847.47L1907 845.22L1908 848.72L1909 846.31L1910 834.45L1911 837.94L1912 831.86L1913 838.42L1914 837.18L1915 834.87L1916 840.12L1917 847.41L1918 840.81L1919 847.16L1920 843.39L1921 840.12L1922 846.17L1923 835.75L1924 846.11L1925 838.88L1926 843.66L1927 848.24L1928 840.85L1929 840.36L1930 847.46L1931 847.99L1932 844.7L1933 844.18L1934 839.69L1935 844.85L1936 846.91L1937 848.88L1938 835.66L1939 834.09L1940 839.53L1941 844.96L1942 849.65L1943 847.82L1944 841.71L1945 837.09L1946 841.32L1947 839.14L1948 835.72L1949 838.07L1950 847.04L1951 838.32L1952 846.07L1953 834.09L1954 838.22L1955 845.44L1956 847.65L1957 840.35L1958 837.49L1959 845.76L1960 845.48L1961 837.68L1962 846.84L1963 846.56L1964 846.24L1965 831.26L1966 845.24L1967 830.74L1968 835.46L1969 846.74L1970 838.88L1971 846.11L1972 844.44L1973 843.78L1974 843.72L1975 838.4L1976 839.97L1977 844.06L1978 846.51L1979 844.72L1980 833.44L1981 845.02L1982 841.5L1983 831.67L1984 845.31L1985 843.76L1986 847.68L1987 846.65L1988 848.76L1989 846.14L1990 840.74L1991 846.3L1992 842.68L1993 847.8L1994 837.77L1995 847.86L1996 835.15L1997 844.93L1998 841.56L1999 848.76L2000 836.21L2001 848.41L2002 848.89L2003 838.5L2004 842.94L2005 841.16L2006 845.13L2007 846.37L2008 832.47L2009 846.41L2010 839.32L2011 842.58L2012 842.28L2013 845.54L2014 833.43L2015 843.83L2016 834.72L2017 837.77L2018 838.07L2019 844.37L2020 843.75L2021 842.56L2022 847.15L2023 844.21L2024 833.19L2025 846.84L2026 848.18L2027 840.4L2028 847.33L2029 839.98L2030 839.14L2031 848.11L2032 838.29L2033 838.64L2034 837.16L2035 844.08L2036 839.4L2037 835.82L2038 845.24L2039 831.71L2040 845.92L2041 839.61L2042 842.91L2043 844.67L2044 847.16L2045 847.18L2046 842.21L2047 845.04L2048 845.97L2049 830.92L2050 843.1L2051 841.64L2052 832.69L2053 841.44L2054 842.26L2055 846.11L2056 845.53L2057 844.69L2058 831.35L2059 844.86L2060 839.28L2061 840.72L2062 840.16L2063 841.09L2064 844.86L2065 846.22L2066 837.59L2067 842.52L2068 832.03L2069 841.6L2070 836.51L2071 841.31L2072 847.2L2073 843.8L2074 848.51L2075 839.01L2076 848.54L2077 838.99L2078 847.32L2079 834.77L2080 840L2081 846.6L2082 841.09L2083 837.83L2084 839.1L2085 837.07L2086 830.91L2087 828.55L2088 840.01L2089 838.6L2090 837.49L2091 825.71L2092 817.48L2093 821.71L2094 831.12L2095 827.14L2096 821.17L2097 835.25L2098 812.47L2099 814.88L2100 817.96L2101 834.42L2102 839.39L2103 833.82L2104 845.45L2105 831.28L2106 846.86L2107 840.62L2108 836.35L2109 840.47L2110 845.3L2111 840.48L2112 839.29L2113 832.98L2114 840.26L2115 848.33L2116 838.15L2117 833.07L2118 846.01L2119 836.47L2120 839.26L2121 847.19L2122 848.71L2123 841.87L2124 836.07L2125 841.51L2126 847.56L2127 843.88L2128 848.08L2129 846.27L2130 841.19L2131 846.22L2132 849.8L2133 845.06L2134 846.12L2135 849.91L2136 848.11L2137 849.63L2138 842.36L2139 850.98L2140 847.15L2141 841.16L2142 838.79L2143 848.84L2144 850.1L2145 846.93L2146 842.04L2147 834.94L2148 849.39L2149 840.7L2150 847.58L2151 832.76L2152 845.62L2153 832.93L2154 844.73L2155 841.9L2156 834.89L2157 848.69L2158 847.24L2159 840.03L2160 842.7L2161 845.07L2162 836.54L2163 850.55L2164 837.3L2165 850.78L2166 846.16L2167 846.37L2168 848.43L2169 846.27L2170 847.84L2171 851.05L2172 840.1L2173 852.6L2174 839.93L2175 851.39L2176 852.41L2177 852.4L2178 849.86L2179 850L2180 849.8L2181 852.46L2182 841.92L2183 847.19L2184 848.5L2185 848.46L2186 851.56L2187 848.44L2188 852.49L2189 841.03L2190 841.73L2191 841.98L2192 852.83L2193 850.35L2194 851.92L2195 843.06L2196 851.63L2197 853.01L2198 849.47L2199 851.6L2200 847.43L2201 845.01L2202 843.83L2203 847.86L2204 851.51L2205 842.27L2206 844.53L2207 850.79L2208 849.41L2209 844.9L2210 844L2211 837.84L2212 820.41L2213 827.07L2214 832.42L2215 814.9L2216 813.12L2217 833.38L2218 837.61L2219 833.03L2220 835.04L2221 837.35L2222 849.95L2223 844L2224 845.69L2225 835.17L2226 841.63L2227 845.27L2228 825.02L2229 836.44L2230 838.78L2231 836.65L2232 828.94L2233 818.84L2234 807.16L2235 826.31L2236 831.21L2237 816.46L2238 828.22L2239 827.71L2240 818.45L2241 823.27L2242 824.26L2243 808.95L2244 815.8L2245 822.22L2246 832.11L2247 821.35L2248 821.07L2249 827.39L2250 832.45L2251 841.39L2252 829.83L2253 826.91L2254 845.57L2255 829.14L2256 834.13L2257 839.72L2258 847.23L2259 843.41L2260 837.33L2261 850.33L2262 841.91L2263 840.15L2264 850.52L2265 841.45L2266 845.91L2267 847.15L2268 852.09L2269 848.79L2270 847.44L2271 843.99L2272 850.47L2273 852.73L2274 845.57L2275 848.71L2276 849.67L2277 842.99L2278 848.86L2279 852.9L2280 842.51L2281 853.08L2282 852.61L2283 850.35L2284 844.37L2285 843.14L2286 843.08L2287 852.74L2288 847.05L2289 852.75L2290 842.7L2291 842.73L2292 843.35L2293 849.01L2294 843.08L2295 851.27L2296 851.55L2297 843.11L2298 852.21L2299 847.85L2300 845.39L2301 847.94L2302 849.51L2303 838.05L2304 844.82L2305 845.17L2306 851.4L2307 850.58L2308 849.43L2309 851.18L2310 842.14L2311 851.22L2312 847.92L2313 844.75L2314 837.82L2315 846.9L2316 850.1L2317 839.44L2318 850.33L2319 847.66L2320 843.86L2321 836.94L2322 847.18L2323 837.09L2324 848.76L2325 845.12L2326 849.39L2327 842.94L2328 840.61L2329 851.67L2330 851.49L2331 838.7L2332 851.78L2333 845.3L2334 841.04L2335 851.32L2336 838.59L2337 846.3L2338 851.51L2339 845.3L2340 843.59L2341 846.38L2342 849.34L2343 841.84L2344 846.76L2345 850.9L2346 848.68L2347 841.47L2348 847.54L2349 852.17L2350 842.81L2351 852L2352 840.63L2353 843.16L2354 850.65L2355 848.84L2356 851.37L2357 841.56L2358 851.63L2359 842.1L2360 850.61L2361 844.11L2362 846.6L2363 847.35L2364 849.24L2365 840.41L2366 846.52L2367 852.5L2368 850.56L2369 843.79L2370 847.57L2371 850.43L2372 844.13L2373 844.4L2374 846.89L2375 845.59L2376 848.5L2377 845.39L2378 852.9L2379 846.21L2380 849.65L2381 846.71L2382 852.77L2383 850.42L2384 848.05L2385 849.72L2386 851.55L2387 850.31L2388 847.33L2389 845.09L2390 849.88L2391 848.82L2392 844.78L2393 838.87L2394 851.6L2395 842.28L2396 842.06L2397 848.73L2398 846.56L2399 841.67L2400 850.63L2401 835.97L2402 840.97L2403 836.38L2404 843.66L2405 842.86L2406 842.55L2407 837L2408 847.71L2409 849.01L2410 844.76L2411 834.68L2412 850.18L2413 839.56L2414 839.03L2415 847.05L2416 848.21L2417 845.41L2418 851.86L2419 849.72L2420 852.39L2421 843.99L2422 845.56L2423 852.02L2424 847.65L2425 848.37L2426 853.41L2427 843.32L2428 848.08L2429 852.7L2430 841.29L2431 850.79L2432 850.73L2433 851.47L2434 851.16L2435 852.01L2436 847.36L2437 843.45L2438 848.45L2439 846.34L2440 848.61L2441 845.56L2442 846.26L2443 844.83L2444 841.69L2445 854L2446 854.02L2447 853.69L2448 851.81L2449 852.23L2450 854.25L2451 851.45L2452 854.03L2453 849.44L2454 842.68L2455 843.64L2456 851.46L2457 853.88L2458 845.08L2459 848.23L2460 853.53L2461 847.91L2462 851.87L2463 848.21L2464 853.59L2465 852.63L2466 841.46L2467 841.64L2468 852.83L2469 846.85L2470 842.37L2471 845.12L2472 853.77L2473 849.24L2474 851.5L2475 848.85L2476 844.54L2477 847.96L2478 842.33L2479 850.54L2480 853.41L2481 852.62L2482 848.72L2483 853.01L2484 852.29L2485 852.75L2486 847.95L2487 849.68L2488 852.87L2489 845.82L2490 845.63L2491 839.4L2492 850.51L2493 852.41L2494 845.25L2495 852.44L2496 841.61L2497 849.08L2498 852.2L2499 838.13L2500 851.33L2501 852.06L2502 849.03L2503 841.45L2504 842.2L2505 844.62L2506 841.36L2507 836.97L2508 847.77L2509 842.25L2510 847.35L2511 844.56L2512 847.03L2513 850.44L2514 845.11L2515 838.53L2516 839.36L2517 850.15L2518 846.49L2519 842.93L2520 851.1L2521 849.61L2522 848.3L2523 850.08L2524 845.28L2525 839.48L2526 842.32L2527 840.47L2528 837.4L2529 850.11L2530 842.36L2531 846.38L2532 837.07L2533 839.13L2534 849.29L2535 849.07L2536 847.7L2537 847.49L2538 843.41L2539 845.98L2540 837.15L2541 848.41L2542 839.22L2543 839.34L2544 838.83L2545 831.82L2546 847.74L2547 839.33L2548 834.43L2549 844.95L2550 847.97L2551 839.37L2552 847.58L2553 833.95L2554 844.47L2555 841.17L2556 845.18L2557 834.86L2558 848.97L2559 841.44L2560 842.78L2561 839.78L2562 835.52L2563 847.33L2564 841.33L2565 839.64L2566 845.78L2567 842.39L2568 849.05L2569 847.17L2570 837.13L2571 848.05L2572 843.32L2573 849L2574 845.9L2575 842.09L2576 839.97L2577 839.03L2578 842.02L2579 834.92L2580 848.95L2581 842.78L2582 847.18L2583 844.62L2584 834.04L2585 843.94L2586 845.65L2587 844.69L2588 846.02L2589 843.34L2590 839.88L2591 842.97L2592 842.14L2593 844.74L2594 835.66L2595 847.18L2596 839.81L2597 842.99L2598 840.07L2599 831.03L2600 844.07L2601 846.4L2602 839.18L2603 834.21L2604 846.69L2605 837.34L2606 838.51L2607 841.75L2608 837.36L2609 836.4L2610 832.2L2611 847.21L2612 832.66L2613 845.52L2614 839.03L2615 847.83L2616 836.41L2617 832.82L2618 847.81L2619 839.05L2620 846.45L2621 836.71L2622 848.58L2623 834.01L2624 843.25L2625 833.58L2626 843.42L2627 834.89L2628 841.6L2629 838.2L2630 837.77L2631 846.91L2632 843.56L2633 841.22L2634 837.85L2635 848.8L2636 848.8L2637 839.28L2638 834.1L2639 837.03L2640 843.62L2641 846.59L2642 839.53L2643 844.64L2644 849.46L2645 846.56L2646 835.29L2647 848.89L2648 834.12L2649 847.49L2650 849.33L2651 840.63L2652 847.42L2653 842.88L2654 848.1L2655 835.78L2656 849.88L2657 844.61L2658 844.14L2659 848.09L2660 850.03L2661 849.54L2662 837.88L2663 848.63L2664 849.61L2665 838.94L2666 848.5L2667 844.42L2668 843.57L2669 842.99L2670 840.16L2671 850.18L2672 840.14L2673 847.8L2674 842.69L2675 848.67L2676 849.35L2677 850.53L2678 839.46L2679 837.61L2680 846.02L2681 842.31L2682 849.19L2683 843.19L2684 847L2685 850.41L2686 843.29L2687 848.65L2688 849.17L2689 843.85L2690 851.46L2691 851.18L2692 851.7L2693 844.65L2694 850.24L2695 839.06L2696 850.14L2697 846.81L2698 847L2699 851.85L2700 841.67L2701 850.7L2702 847.17L2703 851.72L2704 841.65L2705 841.3L2706 849.91L2707 838.64L2708 846.01L2709 851.28L2710 850.18L2711 847.29L2712 849.35L2713 839.65L2714 847.06L2715 843.46L2716 847.75L2717 850.99L2718 848.81L2719 845.87L2720 838.45L2721 848.74L2722 843.69L2723 848.66L2724 843.34L2725 847.57L2726 847.14L2727 847.21L2728 852.07L2729 845.71L2730 845.76L2731 838.71L2732 852.63L2733 852.48L2734 845.11L2735 848.42L2736 848.47L2737 844.88L2738 841.56L2739 851.42L2740 849.67L2741 844.95L2742 846.7L2743 843.95L2744 845.35L2745 840.14L2746 839.13L2747 848.95L2748 841.31L2749 839.82L2750 850.11L2751 845.39L2752 847.06L2753 844.71L2754 837.13L2755 842.61L2756 846.45L2757 846.79L2758 843.77L2759 829.94L2760 827.45L2761 821.16L2762 838.04L2763 817.09L2764 834.14L2765 820.17L2766 812.35L2767 818.52L2768 828.01L2769 832.79L2770 833.11L2771 823.84L2772 818.79L2773 824.46L2774 817.17L2775 838.89L2776 821.02L2777 840.13L2778 829.19L2779 842.75L2780 842.91L2781 831.05L2782 829.39L2783 830.74L2784 836.9L2785 843.04L2786 839.32L2787 839.68L2788 844.26L2789 835L2790 850.62L2791 842.17L2792 850.52L2793 845.93L2794 849.89L2795 848.72L2796 837.66L2797 851.4L2798 848.64L2799 840.32L2800 851.56L2801 841.06L2802 836.91L2803 840.88L2804 842.12L2805 850.98L2806 851.41L2807 838.32L2808 849.89L2809 844.06L2810 845.98L2811 838.92L2812 846.16L2813 844.26L2814 850.43L2815 845.1L2816 851.03L2817 844.22L2818 838.83L2819 838.1L2820 850.68L2821 846.33L2822 836.11L2823 837.78L2824 847.27L2825 847.96L2826 850.41L2827 835.3L2828 841.59L2829 837.32L2830 849.98L2831 846.51L2832 847.19L2833 843.29L2834 839.51L2835 839.65L2836 837.63L2837 842.46L2838 839.63L2839 849.22L2840 837.06L2841 850.84L2842 839.27L2843 842.01L2844 840.19L2845 838.9L2846 850.68L2847 840.05L2848 839.43L2849 838.41L2850 838.08L2851 850.86L2852 850.32L2853 843.81L2854 849.83L2855 837.18L2856 849.89L2857 847.29L2858 849.1L2859 836.76L2860 845.33L2861 850.68L2862 849.78L2863 850.09L2864 848.19L2865 845.55L2866 851.38L2867 845.23L2868 845.65L2869 849.09L2870 837.04L2871 840.04L2872 836.57L2873 851.09L2874 849.26L2875 846.32L2876 849.26L2877 843.66L2878 842.45L2879 850.76L2880 836.4L2881 845.19L2882 839.07L2883 835.5L2884 843.01L2885 843.34L2886 846.54L2887 848.18L2888 846.71L2889 849.62L2890 836.62L2891 847.62L2892 851.23L2893 844.46L2894 838.92L2895 838.85L2896 841.49L2897 850.19L2898 841.34L2899 841.47L2900 843.71L2901 845.58L2902 851.58L2903 851.43L2904 851.27L2905 848.67L2906 851.62L2907 851.76L2908 849.22L2909 842.2L2910 840.8L2911 852.5L2912 843.05L2913 841.85L2914 841.89L2915 844.06L2916 841.39L2917 852.57L2918 838.67L2919 845.47L2920 842.26L2921 841.17L2922 843.38L2923 840.36L2924 851.05L2925 848.33L2926 836.37L2927 842.69L2928 843.33L2929 845.95L2930 850.65L2931 844.54L2932 846.72L2933 840.71L2934 841.76L2935 840.57L2936 846.91L2937 842.67L2938 852.1L2939 840.16L2940 840.41L2941 840.36L2942 848.72L2943 851.77L2944 850.76L2945 852.98L2946 853.42L2947 852.04L2948 849.16L2949 849.54L2950 850.75L2951 840.16L2952 848.23L2953 849.91L2954 847.12L2955 850.47L2956 847.5L2957 841.54L2958 851.23L2959 850.5L2960 850.11L2961 841.57L2962 842.88L2963 841.88L2964 842.81L2965 840.43L2966 852.57L2967 846.2L2968 848.34L2969 851.4L2970 850.83L2971 847.03L2972 842.17L2973 852.25L2974 844.21L2975 852.19L2976 846.41L2977 838.9L2978 843.1L2979 842.97L2980 851.05L2981 845.88L2982 851.29L2983 844.2L2984 851.85L2985 851.39L2986 848.72L2987 850.96L2988 845.2L2989 848.2L2990 849.2L2991 849.85L2992 852.21L2993 842.15L2994 845.98L2995 847.09L2996 850.52L2997 851.82L2998 843.72L2999 851.16L3000 851.37L3001 836.96L3002 845.18L3003 849.22L3004 846.56L3005 846.38L3006 847.54L3007 836.82L3008 839.47L3009 837.93L3010 835.3L3011 849.31L3012 833.61L3013 847.97L3014 848.41L3015 842.93L3016 839.03L3017 846.21L3018 845.95L3019 846.01L3020 843.52L3021 837.07L3022 844.83L3023 847.09L3024 838.19L3025 850.47L3026 848.38L3027 848.79L3028 838.29L3029 849.79L3030 849.2L3031 850.49L3032 847.27L3033 837.83L3034 840.84L3035 845.6L3036 847.68L3037 850.32L3038 849.14L3039 847.14L3040 846.82L3041 849.18L3042 849.09L3043 842.35L3044 848.47L3045 840.21L3046 845.81L3047 824.93L3048 822.49L3049 837.34L3050 833.41L3051 812.8L3052 834.86L3053 832.37L3054 822.97L3055 837.32L3056 839.7L3057 837.98L3058 831.75L3059 823.68L3060 835.92L3061 840.49L3062 840.87L3063 839.61L3064 824.88L3065 821.79L3066 811.97L3067 830.38L3068 814.92L3069 822.68L3070 816.36L3071 829.48L3072 825.07L3073 822.47L3074 797.32L3075 806.81L3076 825.56L3077 803.67L3078 819.67L3079 798.04L3080 798.05L3081 820.89L3082 812.3L3083 820.77L3084 824.14L3085 809.7L3086 822.75L3087 817.78L3088 836.1L3089 834.07L3090 827.27L3091 817.04L3092 822.13L3093 823.68L3094 832.98L3095 823.92L3096 821.95L3097 841.56L3098 838.47L3099 837.76L3100 842.7L3101 835.83L3102 834.65L3103 840.42L3104 838.68L3105 843.01L3106 834.6L3107 841.49L3108 834.32L3109 839.7L3110 843.98L3111 844.52L3112 836.14L3113 844.49L3114 832.88L3115 831.36L3116 826.26L3117 841.61L3118 843.2L3119 842.89L3120 834.32L3121 840.99L3122 832.96L3123 835.38L3124 843.98L3125 825.7L3126 826.92L3127 843.37L3128 838.43L3129 832.43L3130 836.09L3131 830.22L3132 844.66L3133 842.55L3134 838.82L3135 837.94L3136 844.26L3137 833.14L3138 829.93L3139 829.87L3140 845.23L3141 830.26L3142 840.15L3143 834.46L3144 846.16L3145 842.38L3146 836.21L3147 835.1L3148 843.82L3149 841.39L3150 842.37L3151 844.28L3152 846.33L3153 830.81L3154 836.23L3155 840.14L3156 831.24L3157 842.71L3158 834.26L3159 844.71L3160 834.26L3161 843.82L3162 842.76L3163 844.17L3164 845.31L3165 838.91L3166 841.2L3167 842.12L3168 841.73L3169 838.52L3170 826.9L3171 827.47L3172 835.28L3173 845.64L3174 841.2L3175 836.64L3176 845.87L3177 829.4L3178 841.05L3179 843.39L3180 846.27L3181 845.58L3182 844.98L3183 844.37L3184 829.49L3185 835.57L3186 838.67L3187 844.76L3188 846.15L3189 846.75L3190 847.67L3191 843.33L3192 837.95L3193 841.04L3194 837.93L3195 848.02L3196 844.05L3197 832.43L3198 831.64L3199 844.34L3200 832.29L3201 830.28L3202 833.93L3203 835.21L3204 839.77L3205 840.45L3206 835.73L3207 843.19L3208 840.81L3209 839.9L3210 847.95L3211 841.75L3212 847.98L3213 846.28L3214 838.87L3215 847.92L3216 842.81L3217 843.85L3218 848.03L3219 837.87L3220 837.05L3221 835.92L3222 835.21L3223 839.48L3224 843.04L3225 835.23L3226 839.14L3227 846.38L3228 842.4L3229 845.24L3230 846.15L3231 840.09L3232 836.44L3233 846.11L3234 828.47L3235 845.97L3236 843.94L3237 845.09L3238 845.51L3239 828.8L3240 833.84L3241 844.35L3242 844.08L3243 846.43L3244 842.68L3245 840.46L3246 845.54L3247 838.37L3248 846.44L3249 829.89L3250 840.86L3251 846.71L3252 845.4L3253 840.07L3254 843.87L3255 832.32L3256 847.63L3257 833.43L3258 845.79L3259 847.11L3260 832.37L3261 834.33L3262 846.88L3263 840.46L3264 843.26L3265 846.85L3266 847.19L3267 841.05L3268 836.6L3269 843.89L3270 843.54L3271 847.37L3272 835L3273 846.78L3274 842.2L3275 832.29L3276 844.75L3277 840.07L3278 845.13L3279 844.08L3280 844.93L3281 847.38L3282 846.42L3283 847.17L3284 844.23L3285 832.04L3286 846.62L3287 845.38L3288 845.9L3289 841.69L3290 830.78L3291 836.61L3292 843.04L3293 845.85L3294 847.61L3295 840.65L3296 838.8L3297 845.82L3298 835.93L3299 835.37L3300 846.18L3301 840.83L3302 842.93L3303 847.43L3304 848.11L3305 833.81L3306 837.15L3307 840.08L3308 831.92L3309 835.49L3310 834.9L3311 838.15L3312 835.31L3313 844.49L3314 835.96L3315 842L3316 843.06L3317 845.44L3318 845.18L3319 843.61L3320 831.21L3321 830.16L3322 829.26L3323 834.63L3324 829.5L3325 835.11L3326 811.09L3327 826.22L3328 830.89L3329 828.77L3330 833.91L3331 825.15L3332 831.78L3333 838.12L3334 821.55L3335 840.71L3336 842.32L3337 835.91L3338 829.72L3339 840.14L3340 840.88L3341 846.61L3342 843.6L3343 842.49L3344 840.45L3345 846.85L3346 833.92L3347 844.68L3348 834.43L3349 845.5L3350 845.5L3351 848.27L3352 838.77L3353 831.39L3354 831.93L3355 845.79L3356 848.11L3357 843.25L3358 841.78L3359 840.73L3360 836.7L3361 832.88L3362 840.57L3363 844.56L3364 837.33L3365 838.19L3366 843.18L3367 843.54L3368 842.95L3369 839.62L3370 847.43L3371 833.83L3372 834.73L3373 838.63L3374 848.02L3375 834.08L3376 834.09L3377 840.61L3378 847.1L3379 843.79L3380 843.77L3381 847.66L3382 839.64L3383 845.49L3384 848.2L3385 845.56L3386 841.68L3387 837.87L3388 842.49L3389 837.92L3390 847.82L3391 842.91L3392 837.14L3393 844.21L3394 847.08L3395 844.44L3396 834.28L3397 848.84L3398 844.26L3399 848.51L3400 840.63L3401 841.53L3402 835.76L3403 845.67L3404 848.23L3405 838.8L3406 841.21L3407 846.71L3408 839.23L3409 845.54L3410 842.19L3411 839.12L3412 848.16L3413 846.64L3414 846.62L3415 850.98L3416 850.44L3417 840.02L3418 849.3L3419 843.75L3420 850.99L3421 847.11L3422 847.63L3423 850.14L3424 843.93L3425 845.34L3426 842.83L3427 846.59L3428 838.88L3429 836.92L3430 851.45L3431 838.02L3432 849.51L3433 837.2L3434 843.2L3435 846.52L3436 836.71L3437 843.58L3438 833.52L3439 842.1L3440 840.25L3441 823.11L3442 822.68L3443 825.66L3444 831.91L3445 815.55L3446 824.04L3447 828.48L3448 828.16L3449 824.27L3450 834.45L3451 833.08L3452 835.56L3453 846.51L3454 840.03L3455 845.62L3456 840.47L3457 847.26L3457 894.03L3456 893.1L3455 893.47L3454 897.25L3453 899.27L3452 901.36L3451 915.14L3450 914.21L3449 901.67L3448 917.4L3447 907.03L3446 921.85L3445 908.13L3444 924.01L3443 910.21L3442 921.18L3441 903L3440 901.37L3439 913.07L3438 898.77L3437 905.6L3436 903.99L3435 897.98L3434 898.93L3433 901.6L3432 907.62L3431 909.12L3430 903.62L3429 906.92L3428 906.94L3427 907.35L3426 902.52L3425 894.05L3424 896.71L3423 894.43L3422 908.99L3421 895.02L3420 899.68L3419 902.39L3418 894.22L3417 894.13L3416 908.48L3415 905.96L3414 908.81L3413 902.61L3412 908.52L3411 906.17L3410 900.29L3409 905.88L3408 901.2L3407 902.34L3406 904.04L3405 896.23L3404 896.01L3403 894.55L3402 905.39L3401 909.35L3400 897.13L3399 908.17L3398 907.98L3397 900.57L3396 896.15L3395 895.19L3394 895.59L3393 899.13L3392 895.92L3391 895.96L3390 902.87L3389 908.02L3388 907.8L3387 895.91L3386 911.35L3385 895.93L3384 896.03L3383 906.45L3382 903.15L3381 898.36L3380 901.74L3379 902.79L3378 896.27L3377 903.32L3376 896.5L3375 900.74L3374 912.7L3373 898.12L3372 898.58L3371 898.07L3370 901.46L3369 897.33L3368 903.76L3367 897.96L3366 907.46L3365 898.9L3364 902.99L3363 898.75L3362 901.91L3361 912.34L3360 901.6L3359 899.78L3358 896.95L3357 906.4L3356 900.29L3355 914.23L3354 914.32L3353 898.19L3352 899.78L3351 903.32L3350 898.07L3349 915.72L3348 902.97L3347 903.64L3346 904.97L3345 913.26L3344 900.05L3343 900.7L3342 900.06L3341 899.14L3340 906.77L3339 912.78L3338 902.09L3337 914.78L3336 908.58L3335 901.55L3334 902.27L3333 904.82L3332 903.17L3331 911.21L3330 903.26L3329 911.32L3328 904.39L3327 904.85L3326 912.32L3325 909.66L3324 918.4L3323 914.47L3322 914.35L3321 904.91L3320 899.17L3319 899.52L3318 914.96L3317 905.47L3316 898.26L3315 910.72L3314 907.07L3313 911.6L3312 896.97L3311 906.41L3310 899.29L3309 906.93L3308 906.84L3307 909.26L3306 912.66L3305 898.31L3304 896.71L3303 905.59L3302 909.29L3301 899.96L3300 898.77L3299 897.51L3298 898.44L3297 905.21L3296 907.9L3295 901.23L3294 904.42L3293 897.81L3292 902.55L3291 898.56L3290 905.16L3289 909.71L3288 899.23L3287 904.68L3286 901.6L3285 913.14L3284 900.65L3283 897.04L3282 913.45L3281 910.49L3280 900.73L3279 908.46L3278 901.12L3277 909.94L3276 902.74L3275 905.25L3274 911.26L3273 907.59L3272 898.19L3271 909.76L3270 899.31L3269 896.2L3268 901.6L3267 898.14L3266 902.46L3265 897.43L3264 907.87L3263 895.79L3262 895.94L3261 911.02L3260 910.94L3259 903.39L3258 895.87L3257 901.64L3256 899.37L3255 895.56L3254 895.72L3253 902.29L3252 903.33L3251 903.52L3250 898.28L3249 896.44L3248 907.86L3247 896.45L3246 911.35L3245 898.8L3244 896.82L3243 905.05L3242 898.27L3241 902L3240 908.86L3239 908.81L3238 898.48L3237 897.23L3236 896.68L3235 898.05L3234 908.86L3233 901.22L3232 905.81L3231 909.92L3230 896.05L3229 897.43L3228 897.83L3227 895.6L3226 895.76L3225 902.53L3224 905.08L3223 900.77L3222 895.77L3221 896.35L3220 901.69L3219 908.23L3218 896.29L3217 899.66L3216 904.79L3215 899.32L3214 904.77L3213 898.97L3212 897.85L3211 898.46L3210 904.85L3209 898.67L3208 912.52L3207 902.65L3206 903.55L3205 905.01L3204 912.74L3203 914.26L3202 906.09L3201 899.21L3200 899.24L3199 903.17L3198 910.82L3197 901.64L3196 908.19L3195 898.28L3194 901.83L3193 897.34L3192 912.58L3191 909L3190 907.47L3189 906.11L3188 901.68L3187 910.73L3186 904.99L3185 902.96L3184 910.79L3183 908.59L3182 905.1L3181 909L3180 915.93L3179 898.35L3178 902L3177 906.84L3176 903.88L3175 911.35L3174 906.05L3173 910.11L3172 909.53L3171 900.17L3170 905.38L3169 909.03L3168 911.39L3167 910.66L3166 900.61L3165 899.65L3164 910.17L3163 899.61L3162 905.24L3161 903.64L3160 902.11L3159 913.7L3158 898.92L3157 916.8L3156 909.58L3155 899.46L3154 908.62L3153 904.24L3152 913.48L3151 909.36L3150 898.58L3149 898.19L3148 913.56L3147 908.02L3146 902.41L3145 898.64L3144 898.19L3143 897.99L3142 909.99L3141 908.41L3140 899.36L3139 903.42L3138 908.76L3137 906.64L3136 901.05L3135 898.7L3134 900.45L3133 899.56L3132 898.73L3131 901.19L3130 915.03L3129 912.39L3128 912.35L3127 900.68L3126 901.08L3125 902.7L3124 904.64L3123 908.91L3122 908.92L3121 900.82L3120 914.36L3119 899.66L3118 904.4L3117 910.97L3116 908.65L3115 907.73L3114 909.7L3113 906.72L3112 916.63L3111 901.33L3110 915.4L3109 903.89L3108 904.64L3107 901.25L3106 901.27L3105 918.88L3104 908.33L3103 902.62L3102 903.87L3101 910L3100 911.95L3099 922.13L3098 915.68L3097 901.97L3096 913.44L3095 903.16L3094 918.36L3093 915.87L3092 913.82L3091 906.1L3090 922.8L3089 916.22L3088 904.24L3087 911.14L3086 914.73L3085 914.73L3084 917.67L3083 907.38L3082 923.53L3081 908.86L3080 921.41L3079 912.06L3078 915.07L3077 920.68L3076 929.73L3075 920.95L3074 919.63L3073 906.5L3072 919.14L3071 905.16L3070 905.2L3069 903.78L3068 906.08L3067 902.36L3066 907.69L3065 904.23L3064 900.25L3063 906.2L3062 900.95L3061 899.34L3060 902.93L3059 903.33L3058 897.44L3057 897.95L3056 901.04L3055 904.39L3054 906.2L3053 918.98L3052 906.73L3051 914.31L3050 905.47L3049 911.64L3048 917.28L3047 901.29L3046 900.11L3045 897.14L3044 909.52L3043 895.31L3042 903.9L3041 900.22L3040 901.1L3039 908.98L3038 904.68L3037 909.36L3036 909.47L3035 895.56L3034 899.11L3033 908.68L3032 901.71L3031 907.38L3030 894.73L3029 895.93L3028 895.16L3027 906.61L3026 897.18L3025 895.06L3024 905.23L3023 899.58L3022 895.7L3021 901.14L3020 897.49L3019 908.61L3018 900.77L3017 897.97L3016 907.9L3015 900.72L3014 895.54L3013 895.74L3012 896.74L3011 895.45L3010 898.86L3009 903.19L3008 908.84L3007 900.18L3006 902.93L3005 901.1L3004 895.57L3003 898.08L3002 899.61L3001 897.33L3000 898.98L2999 897L2998 899.43L2997 896.33L2996 893.05L2995 898.82L2994 895.36L2993 899.39L2992 893.02L2991 893.14L2990 900.18L2989 898.45L2988 896.61L2987 902.52L2986 895.92L2985 896.34L2984 893.96L2983 904.29L2982 897.81L2981 895.54L2980 901.18L2979 898.52L2978 898.24L2977 907.15L2976 900.2L2975 894.86L2974 902.13L2973 899.7L2972 899.06L2971 905.36L2970 893.99L2969 892.59L2968 904.21L2967 902.92L2966 896.6L2965 893.27L2964 891.91L2963 892.4L2962 899.6L2961 900.52L2960 891.66L2959 903.47L2958 893.23L2957 896.4L2956 896.72L2955 899.2L2954 897.88L2953 901.85L2952 891.7L2951 891.72L2950 899.47L2949 891.64L2948 902.73L2947 891.58L2946 899.61L2945 900.55L2944 895.93L2943 898.28L2942 895.22L2941 895.04L2940 896.54L2939 892.63L2938 893.12L2937 896.34L2936 895.42L2935 906.69L2934 904.71L2933 903L2932 904.78L2931 901.36L2930 906.49L2929 896.01L2928 898.16L2927 905.97L2926 909.15L2925 894.91L2924 898.08L2923 895.73L2922 895.7L2921 894.78L2920 893.31L2919 903.86L2918 895.93L2917 905.81L2916 905.32L2915 901.61L2914 898.84L2913 903.37L2912 894.97L2911 894.23L2910 896.26L2909 892.71L2908 898.07L2907 906.11L2906 906.35L2905 893.59L2904 895.51L2903 896.02L2902 893.17L2901 893.1L2900 894.28L2899 904.69L2898 897.38L2897 898.23L2896 901.57L2895 907.38L2894 895.64L2893 901.95L2892 895.37L2891 895.9L2890 905.23L2889 910.18L2888 899.41L2887 908.27L2886 901.23L2885 910.07L2884 899.99L2883 906.12L2882 896.57L2881 900.91L2880 909.52L2879 898.31L2878 905.76L2877 907.74L2876 895.72L2875 901.43L2874 907.2L2873 894.82L2872 908.91L2871 896.27L2870 907.58L2869 898.81L2868 901.93L2867 900.85L2866 895.04L2865 894.31L2864 905.8L2863 896.46L2862 905.59L2861 899.58L2860 896.13L2859 905.27L2858 902.4L2857 902.19L2856 905.51L2855 901.37L2854 899.26L2853 907.42L2852 901.25L2851 898.32L2850 894.38L2849 902.41L2848 893.58L2847 897.94L2846 897.12L2845 894.11L2844 894.07L2843 906.4L2842 893.65L2841 906.17L2840 894.3L2839 894.55L2838 899.37L2837 894.91L2836 895.85L2835 908.53L2834 895.39L2833 904.05L2832 898.58L2831 894.28L2830 895.58L2829 895.72L2828 898.7L2827 895.42L2826 894.74L2825 895.07L2824 903.29L2823 898.73L2822 894.62L2821 902.2L2820 899.01L2819 908.04L2818 895.66L2817 896.2L2816 894.09L2815 897.81L2814 904.68L2813 894.31L2812 894.83L2811 893.71L2810 895.8L2809 893.53L2808 907.32L2807 902.85L2806 896.1L2805 905.04L2804 901.19L2803 903.67L2802 899.31L2801 894.06L2800 894.81L2799 895.22L2798 893.72L2797 900.97L2796 906.24L2795 894.2L2794 894.14L2793 906.54L2792 895.62L2791 902.9L2790 895.3L2789 893.98L2788 894.2L2787 897.95L2786 897.55L2785 910.35L2784 898.4L2783 896.13L2782 898.27L2781 912.5L2780 897.86L2779 906.11L2778 900.05L2777 913.16L2776 912.55L2775 908.25L2774 912.85L2773 919.23L2772 910.4L2771 916.23L2770 919.88L2769 918.39L2768 923.64L2767 915.52L2766 906.6L2765 904.67L2764 906.23L2763 924.6L2762 907.06L2761 920.84L2760 910.95L2759 916.07L2758 904L2757 900.09L2756 898.31L2755 900.04L2754 914.59L2753 901.54L2752 896.94L2751 906.89L2750 897.03L2749 896.71L2748 904.05L2747 895.97L2746 904.61L2745 896.26L2744 896.36L2743 901.89L2742 908.71L2741 907.6L2740 898.34L2739 906.64L2738 894.82L2737 897.06L2736 906.91L2735 907.39L2734 897.91L2733 896.2L2732 894.75L2731 894.12L2730 892.56L2729 902.72L2728 903.93L2727 893.5L2726 893.66L2725 892.19L2724 899.5L2723 893.03L2722 892.8L2721 904.31L2720 894.15L2719 898.49L2718 892.37L2717 899.56L2716 892.99L2715 904.52L2714 901.58L2713 898.13L2712 893.39L2711 899.46L2710 893.4L2709 904.15L2708 904.53L2707 904.87L2706 903.46L2705 896.03L2704 902.54L2703 897.49L2702 900.89L2701 904.88L2700 901.45L2699 905.08L2698 895.36L2697 906.44L2696 898.46L2695 898.74L2694 895.44L2693 901.28L2692 905.45L2691 898.54L2690 896.09L2689 902.79L2688 898.15L2687 912.45L2686 908.32L2685 897.27L2684 909.88L2683 902.72L2682 905.39L2681 898.35L2680 903.79L2679 903.41L2678 902.31L2677 897.79L2676 897.1L2675 896.01L2674 898.24L2673 896.34L2672 898.41L2671 900.44L2670 895.18L2669 895.56L2668 895.21L2667 904.69L2666 902.65L2665 907.31L2664 895.74L2663 906.9L2662 895.73L2661 896.71L2660 906.09L2659 899.51L2658 912.21L2657 908.5L2656 897.67L2655 912.42L2654 898.36L2653 902.3L2652 904.67L2651 904.57L2650 905.63L2649 910.63L2648 911.03L2647 912.85L2646 908.2L2645 908.92L2644 900.16L2643 911.4L2642 904.13L2641 914.98L2640 914.04L2639 904.99L2638 899.03L2637 897.33L2636 900.53L2635 908.03L2634 910.29L2633 900.6L2632 902.94L2631 901.44L2630 905.38L2629 901.3L2628 907.59L2627 900.05L2626 898.54L2625 899.73L2624 896.83L2623 901.27L2622 902.05L2621 907.1L2620 898L2619 915.03L2618 903.71L2617 905.96L2616 906.34L2615 901.85L2614 909.23L2613 899.12L2612 909.14L2611 902.01L2610 902.69L2609 902.12L2608 903.86L2607 905.83L2606 901.33L2605 899.7L2604 907.54L2603 900.45L2602 904.04L2601 909.3L2600 913.53L2599 916.24L2598 899.55L2597 913.2L2596 914.54L2595 900.89L2594 913.47L2593 917.26L2592 908.17L2591 903.23L2590 907.45L2589 903.65L2588 901.26L2587 898.81L2586 899.63L2585 897.64L2584 899.94L2583 901.36L2582 901.71L2581 905.32L2580 906.64L2579 912.97L2578 904.31L2577 901.58L2576 897.77L2575 900.83L2574 901.05L2573 900.15L2572 905.61L2571 895.81L2570 900.16L2569 910.34L2568 905.07L2567 897.59L2566 907L2565 898L2564 904.15L2563 895.46L2562 909.15L2561 902.23L2560 895.4L2559 896.98L2558 901.38L2557 905.43L2556 899.31L2555 895.48L2554 895.69L2553 908.32L2552 905.62L2551 903.77L2550 910.53L2549 899.6L2548 909.21L2547 899.3L2546 911.93L2545 903.47L2544 905.87L2543 902.18L2542 910.61L2541 895.44L2540 897.09L2539 896.16L2538 907.88L2537 895.44L2536 898.31L2535 902.76L2534 906.24L2533 908.66L2532 906.11L2531 908.43L2530 905.09L2529 908.06L2528 896.02L2527 896.34L2526 898.08L2525 895.01L2524 897.41L2523 896.45L2522 895.23L2521 898.55L2520 895.99L2519 910.07L2518 901.55L2517 899.76L2516 899.54L2515 907.9L2514 906.48L2513 908.52L2512 911.01L2511 906.72L2510 901.57L2509 896.18L2508 901.1L2507 895.4L2506 903.83L2505 909.4L2504 902.38L2503 905.87L2502 895.85L2501 895.77L2500 906.84L2499 906.41L2498 895.99L2497 896.77L2496 901.28L2495 902.81L2494 898.26L2493 893.61L2492 895.49L2491 907.01L2490 905.59L2489 892.85L2488 896.1L2487 897.32L2486 897.25L2485 894.65L2484 892.94L2483 892.6L2482 896.62L2481 901L2480 895.33L2479 893.34L2478 901.35L2477 894.12L2476 891.61L2475 902.24L2474 891.88L2473 895.27L2472 897.24L2471 902.08L2470 892.07L2469 898.6L2468 901.58L2467 900.26L2466 898.03L2465 898.05L2464 896.02L2463 903.15L2462 901.91L2461 891.44L2460 894.75L2459 893.57L2458 901.16L2457 898.21L2456 896.61L2455 903.78L2454 892.67L2453 897.46L2452 891.2L2451 897.42L2450 902.03L2449 891.3L2448 896.36L2447 894.34L2446 895.47L2445 892.68L2444 901.38L2443 891.99L2442 899.88L2441 896.23L2440 899.23L2439 890.92L2438 899.08L2437 903.06L2436 894.11L2435 890.77L2434 896.57L2433 890.74L2432 903.15L2431 891.48L2430 892.36L2429 891.03L2428 891.68L2427 893.77L2426 891.88L2425 893.47L2424 898.31L2423 891.6L2422 894.47L2421 893.84L2420 896.12L2419 905.58L2418 896.64L2417 892.84L2416 903.1L2415 903.59L2414 897.97L2413 900.56L2412 894.25L2411 893.77L2410 907.06L2409 894.68L2408 903.03L2407 894.04L2406 893.93L2405 893.62L2404 898.95L2403 902.55L2402 902.29L2401 903.51L2400 907.07L2399 897.39L2398 905.2L2397 897.72L2396 893.87L2395 904.76L2394 895.93L2393 896.64L2392 899.73L2391 900.91L2390 912.73L2389 905.76L2388 907.53L2387 926.47L2386 920.12L2385 900.38L2384 905.1L2383 897.64L2382 894.23L2381 899.41L2380 892.19L2379 891.95L2378 892.97L2377 904.42L2376 898.49L2375 892.28L2374 900.25L2373 892.05L2372 896.23L2371 899.52L2370 901.68L2369 898.46L2368 898.57L2367 895.27L2366 904.55L2365 898.66L2364 904.67L2363 900.39L2362 903.69L2361 899.71L2360 900.57L2359 898.47L2358 895.59L2357 894.36L2356 902.78L2355 894.55L2354 897.74L2353 897.23L2352 906.82L2351 907.72L2350 902.49L2349 897.16L2348 899.25L2347 900.65L2346 901.24L2345 895.29L2344 901.28L2343 896.27L2342 908.78L2341 899.79L2340 897.39L2339 896.37L2338 896.02L2337 905.23L2336 897.85L2335 893.12L2334 893.68L2333 903.22L2332 900.01L2331 905.47L2330 907.24L2329 902.94L2328 900.87L2327 909.58L2326 901.9L2325 906.05L2324 909.62L2323 907.78L2322 902.13L2321 896.62L2320 895.88L2319 911.73L2318 895.83L2317 897.02L2316 902.04L2315 899.1L2314 897.4L2313 905.73L2312 900.71L2311 897.11L2310 895.29L2309 895.11L2308 907.92L2307 898.63L2306 895.8L2305 902.31L2304 901.76L2303 898.67L2302 898.07L2301 893.74L2300 899.87L2299 898.92L2298 892.88L2297 906.45L2296 892.95L2295 902.82L2294 893.15L2293 898.29L2292 896.67L2291 899.63L2290 901.8L2289 897.47L2288 900.21L2287 899.64L2286 892.18L2285 892.69L2284 892.23L2283 892.27L2282 904.36L2281 904.44L2280 902L2279 905.97L2278 895.31L2277 894.82L2276 898.05L2275 904.2L2274 903.12L2273 901.78L2272 894.81L2271 895.73L2270 893.33L2269 896.01L2268 903.79L2267 895.32L2266 898.24L2265 895.92L2264 893.94L2263 895.15L2262 899.08L2261 904.4L2260 895.28L2259 898.84L2258 903.57L2257 911.47L2256 897.28L2255 914.59L2254 910.8L2253 904.75L2252 915.28L2251 910.35L2250 917.99L2249 924.27L2248 927.53L2247 908L2246 918.85L2245 910.6L2244 928.35L2243 925.99L2242 913.77L2241 928.61L2240 929.98L2239 915.24L2238 920.81L2237 914.94L2236 915.72L2235 910.86L2234 918.3L2233 911.54L2232 921.67L2231 912.13L2230 908.68L2229 912.15L2228 907.15L2227 903.35L2226 902.8L2225 905.86L2224 903.55L2223 906.14L2222 898.02L2221 901.57L2220 908.14L2219 913.4L2218 905.69L2217 925.49L2216 923.11L2215 926.19L2214 916.08L2213 911.13L2212 917.28L2211 900.89L2210 905.51L2209 911.07L2208 897.61L2207 892.27L2206 898.7L2205 901.45L2204 892.34L2203 890.86L2202 897.46L2201 894.01L2200 895.2L2199 894.96L2198 891.09L2197 903.24L2196 891.14L2195 903L2194 893.02L2193 890.91L2192 903.66L2191 892.92L2190 894.68L2189 892.14L2188 902.48L2187 894.65L2186 895.95L2185 901.96L2184 892.68L2183 891.68L2182 899.8L2181 895.25L2180 892.42L2179 891.75L2178 893.41L2177 903.59L2176 900.9L2175 897.58L2174 902.43L2173 895.25L2172 891.88L2171 898.73L2170 892.68L2169 897.11L2168 897.73L2167 899.05L2166 894.48L2165 891.83L2164 894.73L2163 898L2162 900.45L2161 894.41L2160 895.63L2159 894.71L2158 905.25L2157 892.25L2156 892.26L2155 899.66L2154 904.88L2153 899.55L2152 900.5L2151 905.32L2150 895.15L2149 900.99L2148 893.93L2147 905.52L2146 895.27L2145 893.7L2144 896.18L2143 905.51L2142 898.64L2141 897.5L2140 895.09L2139 898.52L2138 901.58L2137 902.29L2136 896.69L2135 904.65L2134 896.34L2133 899.52L2132 904.14L2131 907.26L2130 899.05L2129 898.68L2128 899.7L2127 910.22L2126 905.24L2125 897.15L2124 897.38L2123 903.15L2122 906.73L2121 900.65L2120 902.26L2119 907.79L2118 898.79L2117 897.53L2116 902.92L2115 896.87L2114 897.67L2113 910.47L2112 896.89L2111 909.5L2110 897.79L2109 907.37L2108 912.05L2107 897.16L2106 902.05L2105 907L2104 899.28L2103 900.4L2102 899.51L2101 907.58L2100 902.95L2099 904.05L2098 899.65L2097 911.13L2096 911.14L2095 902.6L2094 912.4L2093 914.01L2092 909.3L2091 903.94L2090 906.53L2089 898.3L2088 900.25L2087 898.34L2086 901.75L2085 911.58L2084 898.48L2083 898.77L2082 899.35L2081 898.89L2080 902.11L2079 907.64L2078 903.91L2077 909.89L2076 899.28L2075 897.45L2074 899.34L2073 910.09L2072 913.16L2071 906.56L2070 912.62L2069 899.1L2068 896.63L2067 898.96L2066 902.96L2065 907.74L2064 900.28L2063 905.69L2062 908.66L2061 896.86L2060 904.42L2059 897.22L2058 904.84L2057 899.36L2056 901.45L2055 899.15L2054 905.31L2053 902.13L2052 898.59L2051 908.53L2050 906.25L2049 900.3L2048 903.01L2047 908.85L2046 900.92L2045 902.6L2044 902.01L2043 903.88L2042 899.98L2041 901.9L2040 897.09L2039 897.83L2038 904.04L2037 899.68L2036 901.9L2035 911.03L2034 906.47L2033 906.78L2032 901.22L2031 897.19L2030 907.48L2029 906.75L2028 902.76L2027 906.4L2026 898.32L2025 898.57L2024 898.05L2023 911.81L2022 915.11L2021 899.27L2020 904.12L2019 900.58L2018 905.65L2017 909.9L2016 900.91L2015 909.08L2014 916.49L2013 916.83L2012 902.24L2011 898.15L2010 902.73L2009 899.83L2008 905.44L2007 908.71L2006 904.6L2005 898.4L2004 904.19L2003 907.12L2002 897.83L2001 908.03L2000 901.82L1999 896.84L1998 911.53L1997 913.29L1996 914.36L1995 897.43L1994 914.38L1993 899.25L1992 904.73L1991 903.92L1990 897.94L1989 899.44L1988 899.27L1987 901.29L1986 909.74L1985 913.73L1984 904.26L1983 906.79L1982 902.11L1981 899.91L1980 901.84L1979 910.17L1978 898.17L1977 903.51L1976 913.69L1975 912.32L1974 908.21L1973 908.47L1972 899.5L1971 898.3L1970 909.67L1969 899.29L1968 899.57L1967 903.15L1966 912.61L1965 902.14L1964 903.69L1963 906.35L1962 907.65L1961 899.35L1960 899.33L1959 911.4L1958 911.74L1957 912.42L1956 899.93L1955 903.22L1954 897.41L1953 913.4L1952 898.86L1951 910.76L1950 912.22L1949 906.23L1948 906.02L1947 897.06L1946 905.57L1945 902.3L1944 897.47L1943 909.39L1942 900.85L1941 899.2L1940 899.8L1939 897.96L1938 896.05L1937 911.18L1936 896.63L1935 900.29L1934 897.88L1933 906.06L1932 911.78L1931 900.76L1930 911.93L1929 909.42L1928 897.02L1927 912.46L1926 898.07L1925 906.81L1924 898.24L1923 898.04L1922 899.17L1921 899.87L1920 898.52L1919 911.17L1918 905.56L1917 897.63L1916 897.63L1915 908.99L1914 897.36L1913 911.75L1912 898.49L1911 909.39L1910 900.45L1909 908.66L1908 896.79L1907 896.15L1906 896.63L1905 904.6L1904 896.1L1903 907.59L1902 902.62L1901 907.52L1900 895.86L1899 902.81L1898 896.27L1897 898.36L1896 895.49L1895 908.37L1894 907.56L1893 910.09L1892 909.99L1891 897.4L1890 901.71L1889 911.26L1888 911.24L1887 897.43L1886 896.94L1885 898.62L1884 908.2L1883 906.63L1882 897.04L1881 903.99L1880 902.04L1879 901.77L1878 898.19L1877 907.29L1876 904.41L1875 912.99L1874 905.95L1873 903.34L1872 899.02L1871 903.49L1870 902.13L1869 904.7L1868 899.77L1867 918.46L1866 899.62L1865 909.81L1864 900.64L1863 918.19L1862 901.3L1861 905.11L1860 914.31L1859 903.11L1858 912.48L1857 903.99L1856 920.16L1855 905.95L1854 909.04L1853 903.33L1852 903.77L1851 909.35L1850 913.58L1849 919.99L1848 913.46L1847 911.09L1846 906.12L1845 906.37L1844 908.81L1843 924.66L1842 910.89L1841 911.91L1840 905.43L1839 927.74L1838 911.44L1837 905.61L1836 905.32L1835 917.99L1834 916.59L1833 918.46L1832 902.16L1831 920.83L1830 921.22L1829 906.5L1828 904.71L1827 911.66L1826 905.43L1825 903.6L1824 909.32L1823 908.08L1822 923.06L1821 907.36L1820 927.24L1819 913.58L1818 917.78L1817 929.79L1816 908.56L1815 921.48L1814 922.24L1813 904.02L1812 901.42L1811 902.68L1810 903.05L1809 898.44L1808 913.33L1807 898.14L1806 912.6L1805 913.81L1804 901.36L1803 900.5L1802 900.23L1801 906.5L1800 906.09L1799 910.39L1798 907.83L1797 899.13L1796 899.89L1795 909.5L1794 909.2L1793 910.53L1792 913.59L1791 903.23L1790 897.75L1789 907.65L1788 905L1787 897.76L1786 897.87L1785 897.37L1784 905.69L1783 904.8L1782 906.34L1781 903.59L1780 901.37L1779 898.04L1778 909.11L1777 909.48L1776 905.26L1775 904.13L1774 910.41L1773 910.78L1772 897.24L1771 900.26L1770 905.7L1769 910.6L1768 906.61L1767 897.62L1766 900.89L1765 896.63L1764 895.29L1763 904.47L1762 896.86L1761 899.65L1760 901.94L1759 896.2L1758 894.85L1757 896.42L1756 895.02L1755 904.57L1754 903.34L1753 905.36L1752 909.25L1751 911.03L1750 899.71L1749 912.11L1748 896.14L1747 897.21L1746 911.19L1745 907.33L1744 912.09L1743 908.29L1742 899.5L1741 912.82L1740 911.09L1739 908.77L1738 899.57L1737 897.27L1736 897.23L1735 900.76L1734 898.55L1733 909.85L1732 909.79L1731 909.5L1730 904.1L1729 899.01L1728 905.48L1727 896.28L1726 908.28L1725 908.94L1724 895.19L1723 908.19L1722 907.65L1721 902.77L1720 900.61L1719 903.72L1718 902.29L1717 902.47L1716 904.95L1715 903.24L1714 901.03L1713 909.8L1712 895.31L1711 905.32L1710 897.53L1709 895.87L1708 909.81L1707 907.94L1706 898.81L1705 902.71L1704 897.93L1703 895.95L1702 900.37L1701 898.04L1700 895.08L1699 903.75L1698 897.53L1697 904.21L1696 896.61L1695 895.01L1694 896.83L1693 894.57L1692 895.39L1691 905.85L1690 895.6L1689 896.14L1688 893.95L1687 895.95L1686 905.03L1685 894.18L1684 893.61L1683 894.41L1682 896.62L1681 906.56L1680 894.3L1679 898.08L1678 908.34L1677 894.34L1676 894.65L1675 896.04L1674 899.27L1673 897.32L1672 907.89L1671 897.32L1670 899.73L1669 907.42L1668 903.72L1667 902.51L1666 902.72L1665 900L1664 899L1663 902.15L1662 896.21L1661 899.59L1660 902.9L1659 909.12L1658 894.85L1657 901.26L1656 898.15L1655 897.56L1654 907.7L1653 895.41L1652 897.78L1651 896.39L1650 894.18L1649 904.03L1648 894.99L1647 893.34L1646 894.72L1645 904.22L1644 893.17L1643 896.64L1642 904.83L1641 905.87L1640 893.76L1639 903.25L1638 902.79L1637 905.12L1636 902.43L1635 894.02L1634 897.89L1633 902.29L1632 903.66L1631 894.13L1630 902.55L1629 901.56L1628 898.02L1627 909.23L1626 894.87L1625 894.68L1624 905.35L1623 909.76L1622 906.51L1621 906.83L1620 896.65L1619 905.73L1618 896.09L1617 911.28L1616 900.29L1615 903.54L1614 910.66L1613 913.28L1612 911.48L1611 904.06L1610 909.62L1609 904.82L1608 896.82L1607 910.5L1606 898.25L1605 899.26L1604 900.29L1603 896.67L1602 902.24L1601 909.45L1600 905.96L1599 902.19L1598 911.62L1597 897.49L1596 900.15L1595 896.16L1594 898.81L1593 905.84L1592 903.97L1591 912.87L1590 909.66L1589 908.22L1588 899.34L1587 899.38L1586 901.03L1585 906.91L1584 898.22L1583 910.54L1582 908.33L1581 906.5L1580 905.03L1579 898.47L1578 899.02L1577 915.73L1576 908.97L1575 907.41L1574 907.57L1573 898.49L1572 909.38L1571 898.5L1570 899.88L1569 906.86L1568 902.4L1567 899.33L1566 897.71L1565 897.59L1564 910L1563 903.68L1562 897.78L1561 903.63L1560 910.43L1559 905.28L1558 897.18L1557 902.58L1556 911.24L1555 901.55L1554 910.66L1553 909.92L1552 897.89L1551 898.66L1550 901.09L1549 907.06L1548 899.52L1547 899.24L1546 917.22L1545 911.87L1544 911.57L1543 918.7L1542 908.18L1541 912.91L1540 910.41L1539 909.11L1538 925.3L1537 914.83L1536 915.61L1535 906.68L1534 903.23L1533 910.79L1532 919.32L1531 904.88L1530 916.89L1529 900.34L1528 898.34L1527 910.26L1526 901.96L1525 897.67L1524 906.68L1523 896.72L1522 897.45L1521 901.52L1520 909.89L1519 906.52L1518 902.38L1517 897.64L1516 906.69L1515 897.76L1514 903.79L1513 899.98L1512 897.41L1511 898.48L1510 906.83L1509 903.78L1508 906.62L1507 902.88L1506 899.41L1505 900.05L1504 900.51L1503 900.2L1502 906.28L1501 912L1500 911.96L1499 913.48L1498 901.65L1497 899.86L1496 902.32L1495 899L1494 899.77L1493 914.53L1492 909.14L1491 913.64L1490 900.97L1489 902.05L1488 907.39L1487 896.78L1486 900.97L1485 909.88L1484 902.9L1483 903.26L1482 896.71L1481 897.5L1480 897.14L1479 902.65L1478 913.08L1477 904.47L1476 897.52L1475 907.95L1474 900.74L1473 900.66L1472 897.43L1471 901.8L1470 903.85L1469 897.66L1468 900.65L1467 898.61L1466 907.18L1465 912.52L1464 898.37L1463 907.19L1462 914.87L1461 904.01L1460 898.32L1459 898.77L1458 900.78L1457 911.17L1456 904.56L1455 911.03L1454 896.6L1453 903.76L1452 906.91L1451 897.94L1450 904.27L1449 904.25L1448 908.59L1447 898.89L1446 899.36L1445 899.7L1444 903.45L1443 897.03L1442 901.42L1441 901.85L1440 909.66L1439 897.47L1438 906.3L1437 897.5L1436 897.73L1435 898.38L1434 898.22L1433 905.22L1432 909.33L1431 909.9L1430 902.15L1429 909.83L1428 895.79L1427 897.01L1426 894.91L1425 894.37L1424 895.81L1423 900.74L1422 896.11L1421 906.66L1420 896.29L1419 903.84L1418 895.16L1417 899.73L1416 908.44L1415 908.52L1414 900.51L1413 902.14L1412 894.73L1411 904.85L1410 895.76L1409 896.24L1408 898.52L1407 897.71L1406 894.8L1405 895.25L1404 894.96L1403 902.36L1402 906.51L1401 902.67L1400 895.53L1399 902.86L1398 895.38L1397 895.7L1396 906.59L1395 901.17L1394 902.84L1393 899.33L1392 911.73L1391 907.7L1390 898.46L1389 898.08L1388 897.04L1387 903.79L1386 904.59L1385 909.79L1384 896.98L1383 912.29L1382 898.52L1381 901.07L1380 900.16L1379 908.04L1378 897.69L1377 903.75L1376 904.15L1375 909.13L1374 906.66L1373 909.4L1372 900.53L1371 897.6L1370 902.22L1369 904.3L1368 909.71L1367 904.49L1366 908.6L1365 906.74L1364 900.3L1363 909.95L1362 911.13L1361 903.81L1360 906.3L1359 897.44L1358 902L1357 901.64L1356 909.56L1355 913.79L1354 897.29L1353 914.27L1352 900.54L1351 914.53L1350 897.91L1349 902.16L1348 900.7L1347 901.01L1346 910.27L1345 906.11L1344 912.28L1343 907.91L1342 901.5L1341 897.57L1340 900.73L1339 905.11L1338 897.51L1337 897.09L1336 901.87L1335 909.88L1334 901.81L1333 904.02L1332 908.21L1331 901.2L1330 909.06L1329 896.55L1328 900.32L1327 911.89L1326 903.8L1325 902.69L1324 898.66L1323 900.25L1322 901.62L1321 908.39L1320 909.06L1319 900.75L1318 899.32L1317 909.19L1316 908.18L1315 914.78L1314 907.48L1313 899.83L1312 918.12L1311 900.65L1310 901.96L1309 919.23L1308 901.85L1307 906.54L1306 906.18L1305 916.14L1304 909.46L1303 900.48L1302 901.94L1301 906.91L1300 907.12L1299 910.71L1298 908.87L1297 910.96L1296 898.4L1295 897.82L1294 906.27L1293 900.56L1292 901.8L1291 901.14L1290 910.41L1289 896.5L1288 904.11L1287 908.53L1286 901.68L1285 906.56L1284 898.55L1283 898.29L1282 907.66L1281 901.05L1280 898.38L1279 902.92L1278 900.82L1277 908.88L1276 906.74L1275 910.93L1274 900.95L1273 909.4L1272 896.3L1271 905.31L1270 899.52L1269 907.87L1268 897.26L1267 897.68L1266 905.38L1265 898.46L1264 897.21L1263 902.14L1262 904.98L1261 909.14L1260 904.87L1259 907.74L1258 896.74L1257 896.16L1256 898.86L1255 904.46L1254 905.33L1253 900.08L1252 909.52L1251 895.31L1250 896.3L1249 898.04L1248 899.39L1247 897.6L1246 895.11L1245 899.44L1244 895.35L1243 894.71L1242 903.74L1241 908.58L1240 894.36L1239 894.23L1238 894.74L1237 894.59L1236 903.86L1235 905L1234 898.5L1233 894.72L1232 902.55L1231 894.42L1230 899.25L1229 903.39L1228 905.38L1227 905.15L1226 904.88L1225 898.66L1224 898.63L1223 894.41L1222 895.6L1221 902.67L1220 903.53L1219 904.82L1218 893.21L1217 893.43L1216 900.19L1215 897.88L1214 894.31L1213 898.51L1212 902.49L1211 898.25L1210 892.62L1209 904.01L1208 897.14L1207 901.32L1206 901.82L1205 902L1204 891.86L1203 894.1L1202 903.36L1201 902.17L1200 893.01L1199 903.36L1198 893.23L1197 894L1196 893.99L1195 901.61L1194 897.17L1193 898.75L1192 900.37L1191 897.87L1190 896.27L1189 894.12L1188 901.64L1187 904.87L1186 902.57L1185 901.56L1184 898.43L1183 905.62L1182 893.77L1181 893.46L1180 897.56L1179 894.49L1178 895.47L1177 907.6L1176 893.86L1175 905.92L1174 893.34L1173 895.75L1172 896.54L1171 900.52L1170 899.13L1169 893.49L1168 897.94L1167 895.9L1166 902.89L1165 894.68L1164 906.44L1163 901.51L1162 900.29L1161 905.97L1160 908.92L1159 911.03L1158 916.78L1157 912.39L1156 916.58L1155 924.61L1154 911.04L1153 917.37L1152 898.5L1151 901.72L1150 896.59L1149 892.55L1148 893.13L1147 890.93L1146 899.8L1145 897.91L1144 890.5L1143 892.18L1142 895.31L1141 900.13L1140 895.24L1139 896.07L1138 891.26L1137 891.63L1136 890.76L1135 897.26L1134 894.09L1133 899.21L1132 896.21L1131 895.02L1130 890.86L1129 898.29L1128 892.73L1127 901.05L1126 898.44L1125 892.39L1124 890.38L1123 890.24L1122 901.22L1121 891.51L1120 895.67L1119 900.03L1118 894.33L1117 891.52L1116 894.55L1115 891.92L1114 898.74L1113 898.37L1112 901.09L1111 895.47L1110 891.53L1109 891.73L1108 902.58L1107 901.57L1106 897.51L1105 898.08L1104 900.36L1103 893.84L1102 904.71L1101 894.84L1100 902.45L1099 893.31L1098 906.12L1097 903.43L1096 901.78L1095 892.97L1094 896.91L1093 893.31L1092 894.76L1091 895.6L1090 893.73L1089 895.11L1088 899.49L1087 894.45L1086 904.35L1085 891.61L1084 894.47L1083 893.11L1082 892.38L1081 900.96L1080 898.73L1079 897.49L1078 893.56L1077 892.34L1076 903.41L1075 893.82L1074 892.87L1073 893.63L1072 894.78L1071 902.03L1070 893.73L1069 897.04L1068 896.66L1067 892.6L1066 903.99L1065 906L1064 893.11L1063 893.65L1062 896.74L1061 895.07L1060 895.87L1059 893.77L1058 895.45L1057 907.23L1056 893.58L1055 899.26L1054 895.23L1053 895.95L1052 903.83L1051 906.6L1050 896.18L1049 899.76L1048 900.56L1047 900.27L1046 892.63L1045 895.64L1044 892.21L1043 897.69L1042 901.44L1041 892.78L1040 894.62L1039 898.82L1038 892L1037 902.3L1036 893.32L1035 893.13L1034 896.52L1033 900.39L1032 901.74L1031 904.42L1030 899.13L1029 896.9L1028 899.96L1027 900.66L1026 899.16L1025 896.75L1024 900.46L1023 902.64L1022 912.51L1021 904.1L1020 899.2L1019 915.61L1018 905.57L1017 908.55L1016 902.74L1015 904.21L1014 925.71L1013 925.62L1012 929.12L1011 910.18L1010 913.04L1009 926.73L1008 910.09L1007 928.67L1006 926.56L1005 918.93L1004 911.99L1003 925.79L1002 909.52L1001 913.88L1000 920.74L999 922.17L998 906.45L997 906.77L996 910.34L995 905.99L994 921.47L993 901.75L992 911.85L991 910.22L990 902.01L989 899.59L988 897.79L987 909.89L986 896.52L985 894.35L984 896.51L983 893.29L982 894.48L981 902.79L980 893.2L979 905.05L978 891.91L977 892.08L976 900.9L975 899.96L974 897.94L973 896.96L972 892.45L971 903.16L970 892.56L969 895.67L968 903.41L967 894.88L966 891.9L965 899.79L964 893.57L963 892.07L962 896.84L961 895.6L960 893.43L959 890.87L958 901.39L957 900.11L956 891.25L955 902.92L954 892.92L953 893.72L952 894.15L951 899.54L950 892.05L949 894.12L948 891.11L947 902.36L946 902.66L945 890.87L944 902.02L943 894.05L942 899.22L941 897.78L940 896.92L939 903.04L938 891.09L937 893.94L936 897.15L935 896.18L934 893.56L933 891.75L932 899.46L931 893.58L930 891.61L929 903.53L928 892.68L927 895.82L926 899.03L925 903.93L924 893.49L923 897.8L922 895.31L921 899.3L920 896.98L919 898.37L918 894.33L917 900.03L916 896.85L915 897.62L914 893.73L913 898.42L912 898.89L911 903.79L910 892.53L909 892.95L908 894.57L907 898.12L906 895.18L905 894.5L904 893.09L903 897.61L902 892.28L901 901.9L900 904.43L899 895.45L898 894.32L897 901.34L896 900.15L895 893.6L894 894.02L893 902.55L892 894.01L891 893.98L890 899.65L889 896.52L888 894.05L887 909.24L886 908.12L885 902.21L884 901.06L883 908.34L882 898.85L881 909.93L880 902.97L879 908.92L878 899.17L877 901.25L876 898.67L875 895.05L874 904.59L873 899.04L872 898.19L871 901.99L870 903.04L869 900.19L868 916.61L867 902.31L866 902.73L865 901.12L864 901.46L863 902.83L862 907.04L861 900.49L860 900.59L859 902.36L858 906.5L857 908.6L856 911.11L855 895.27L854 896.24L853 894.81L852 897.83L851 895.15L850 900.29L849 901.91L848 897.01L847 894.86L846 908.36L845 895.07L844 907.51L843 895.8L842 902.78L841 894.49L840 902.74L839 901.05L838 894.17L837 906.45L836 894.63L835 900.51L834 900.81L833 900.03L832 896.99L831 900.75L830 899.71L829 897.96L828 894.88L827 896.06L826 901.74L825 902.19L824 901.96L823 904.8L822 903.86L821 908.99L820 911.04L819 897.05L818 905.82L817 910.54L816 896.32L815 895.86L814 896.27L813 898.66L812 903.92L811 898.63L810 901.95L809 897.12L808 909L807 896.05L806 900.29L805 906.63L804 898.87L803 901.44L802 905.29L801 897.1L800 899.8L799 898.16L798 904.11L797 901.67L796 910.56L795 902.56L794 898.61L793 900.57L792 897.72L791 903.31L790 903.35L789 898.23L788 904.92L787 906.92L786 899.81L785 906.74L784 896.86L783 906.51L782 896.89L781 903.7L780 907.24L779 912.51L778 903.79L777 900.34L776 901.26L775 914.05L774 905.27L773 904.94L772 897.82L771 899.46L770 904.5L769 906.58L768 900.55L767 900.44L766 905.75L765 910.71L764 907.67L763 911.98L762 905.97L761 898.34L760 898.6L759 911.79L758 901.39L757 905.78L756 896.63L755 899.33L754 896.38L753 900.4L752 905.89L751 903.24L750 910.84L749 900.36L748 900.86L747 901.03L746 903.17L745 898.06L744 903.67L743 900.33L742 910.12L741 896.52L740 906.54L739 899.46L738 910.51L737 895.55L736 896.88L735 899.61L734 900.37L733 905.72L732 896.58L731 908.62L730 909.88L729 902.46L728 899.28L727 898.7L726 896.84L725 898.31L724 895.44L723 909.27L722 897.47L721 905.1L720 907.57L719 898.02L718 897.69L717 900.41L716 910.22L715 906.31L714 909.02L713 899.74L712 900.98L711 896.83L710 902.2L709 899.27L708 903.47L707 908.34L706 904.32L705 901.59L704 895.2L703 899.77L702 896.05L701 897.14L700 897.36L699 894.53L698 894.98L697 895.09L696 899.74L695 902.39L694 901.3L693 895.6L692 897.83L691 904.08L690 898.46L689 896.11L688 899.02L687 893.94L686 899.43L685 894.26L684 906.3L683 895.7L682 904.02L681 902.05L680 895.03L679 897.03L678 893.35L677 895.56L676 898.7L675 897.08L674 903.06L673 894.88L672 893.54L671 899.99L670 894.61L669 906.23L668 895.28L667 893.46L666 895.83L665 895.38L664 905.09L663 900.5L662 903.27L661 894.75L660 893.89L659 897.63L658 906.37L657 898.59L656 897.5L655 906.58L654 904.27L653 900.37L652 902.3L651 902.02L650 905.28L649 892.99L648 902.95L647 900.94L646 897.38L645 904.18L644 898.25L643 902.56L642 906.44L641 895.39L640 898.96L639 906.46L638 902.94L637 898.77L636 895.08L635 894.1L634 901.3L633 903.53L632 904.18L631 904.05L630 903.68L629 905.89L628 906.28L627 898.01L626 915.83L625 906.36L624 911.61L623 901.69L622 907.73L621 907.66L620 905.31L619 902.98L618 915.44L617 903.82L616 908.59L615 906.14L614 906.34L613 903.03L612 903.17L611 910.5L610 902.51L609 910.2L608 903.31L607 910.31L606 907.61L605 914.19L604 905.28L603 911.17L602 906.51L601 900.57L600 909.73L599 914.3L598 910.36L597 906.7L596 914.34L595 908.93L594 906.27L593 900.97L592 903.98L591 905L590 904.97L589 909.81L588 925.67L587 909.61L586 907.52L585 914.15L584 904.82L583 900.37L582 895.75L581 899.08L580 894.24L579 900.23L578 899.89L577 903.14L576 905.7L575 896.26L574 898.91L573 895L572 895.99L571 895.87L570 905.75L569 903.8L568 894.77L567 896.05L566 909.66L565 895.08L564 899.1L563 905.49L562 896.26L561 900.6L560 900.27L559 909.5L558 902.56L557 897.75L556 909.16L555 902.33L554 897.28L553 907.54L552 897.91L551 903.27L550 903.42L549 899.61L548 899.75L547 897.87L546 905.61L545 896.3L544 908.43L543 910.37L542 906.52L541 908.78L540 902.96L539 900.14L538 907.5L537 907.25L536 900.45L535 897.66L534 899.4L533 902.88L532 902.22L531 894.91L530 904.69L529 894.71L528 898.88L527 901.28L526 897.64L525 907.19L524 895.08L523 898.13L522 902.38L521 900.74L520 899.65L519 899.58L518 896.26L517 895.87L516 906.91L515 902.95L514 906.74L513 899.01L512 895.79L511 894.88L510 897.48L509 896.87L508 897.08L507 897.02L506 903.38L505 899.44L504 895.86L503 899.97L502 895.34L501 909.38L500 895.66L499 895.97L498 897.9L497 908.08L496 899.22L495 895.68L494 903.64L493 901.08L492 906.59L491 896.41L490 899.02L489 895.56L488 901.53L487 898.84L486 899.3L485 901.5L484 894.59L483 894.89L482 897.25L481 909.32L480 894.66L479 898.66L478 894.64L477 895.32L476 901.6L475 897.66L474 900.19L473 904.63L472 896.03L471 895.34L470 903.12L469 901.9L468 897.71L467 907.06L466 903.53L465 905.44L464 903.32L463 893.48L462 897.47L461 894.52L460 905.68L459 894.26L458 902.52L457 897.5L456 895.08L455 896.92L454 896.62L453 895.15L452 906.55L451 901.05L450 902.89L449 905.26L448 903.67L447 893.69L446 898.06L445 897.29L444 893.57L443 893.02L442 893.51L441 894.35L440 900.34L439 901.51L438 895.23L437 894.35L436 896.83L435 897.95L434 892.09L433 893.39L432 895.09L431 902.37L430 902.86L429 893.18L428 896.4L427 892.23L426 901.39L425 892.21L424 892.99L423 898.74L422 897.08L421 894.93L420 903.17L419 899.91L418 894.87L417 892.73L416 902.07L415 893.48L414 896.61L413 893.74L412 895.82L411 906.36L410 898.27L409 900.13L408 903.59L407 902.89L406 896.95L405 900.57L404 902.95L403 906.49L402 898.75L401 895.46L400 910.29L399 904.22L398 896L397 901.91L396 899.61L395 904.78L394 900.14L393 908.74L392 899.55L391 894.99L390 900.53L389 897.39L388 902.3L387 908.34L386 895.84L385 909.41L384 896.33L383 900.13L382 894.51L381 894.6L380 894.43L379 907.86L378 899.04L377 896.07L376 894.17L375 898.07L374 899.64L373 905.28L372 895.68L371 894.97L370 898.7L369 895.16L368 897.74L367 896.96L366 902.92L365 910.52L364 901.93L363 902.87L362 897.94L361 895.61L360 902.9L359 896.9L358 898.01L357 895.33L356 906.69L355 898.79L354 901.3L353 901.24L352 897.49L351 909.98L350 900.58L349 901.62L348 897.51L347 904.73L346 897.24L345 897.53L344 913.58L343 899.15L342 903.09L341 904.26L340 898.16L339 900.41L338 899.06L337 907.67L336 909.62L335 908L334 898.98L333 908.9L332 899.31L331 900.4L330 907.14L329 899.23L328 898.65L327 904.42L326 898.47L325 905.49L324 898.28L323 899.12L322 902.67L321 899.85L320 906.07L319 905.84L318 899.41L317 909.11L316 899.19L315 897.81L314 897.31L313 901.79L312 903.84L311 900.14L310 909.87L309 899.68L308 901.29L307 908.72L306 898.52L305 899.84L304 918.19L303 917.83L302 908.12L301 919.6L300 907.79L299 902.32L298 906.98L297 909.21L296 916.28L295 908.23L294 913.92L293 911.25L292 900.16L291 905.87L290 905.71L289 914.91L288 903.02L287 901.02L286 897.72L285 907.03L284 903.17L283 908.66L282 908.16L281 901.63L280 897.24L279 912.59L278 898.03L277 913.99L276 897.56L275 912.39L274 901.72L273 903.29L272 898.99L271 901.15L270 901.28L269 900.95L268 918.06L267 913.11L266 916.71L265 920.42L264 918.15L263 917.11L262 914.17L261 900.96L260 910.68L259 909.18L258 913.49L257 900.17L256 910.25L255 901.82L254 904.7L253 916.61L252 898.65L251 902.19L250 900.06L249 901.46L248 897.8L247 901.13L246 913.63L245 904.25L244 903.03L243 899.78L242 906.89L241 902.06L240 903.86L239 900.75L238 905.01L237 907.68L236 900.15L235 913.3L234 901.12L233 898.32L232 908.4L231 898.07L230 914.74L229 907.65L228 905.78L227 901.68L226 902.17L225 909.22L224 903.21L223 899.49L222 898.54L221 915.25L220 915.05L219 908.71L218 911.29L217 909.83L216 906.53L215 898.55L214 899.45L213 903.68L212 908.29L211 914.14L210 912.02L209 914.87L208 903.62L207 908.76L206 906.78L205 899.04L204 905.79L203 898.46L202 899.23L201 906.23L200 900.88L199 904.89L198 902.91L197 913.44L196 905.96L195 900.28L194 907.53L193 914.23L192 900.89L191 900.17L190 902.41L189 905.68L188 898.96L187 906.73L186 913.63L185 899.24L184 897.95L183 904.58L182 899.45L181 903.65L180 905.33L179 910.36L178 911.62L177 905.96L176 896.96L175 898.73L174 899L173 907.2L172 899.42L171 896.38L170 901.91L169 903.14L168 907.41L167 904.52L166 910.5L165 912.2L164 905.7L163 899.98L162 896.63L161 900.69L160 904.66L159 897.56L158 910.55L157 912.73L156 901.66L155 900.3L154 910.18L153 900.31L152 905.27L151 899.96L150 907.62L149 912.71L148 900.3L147 899.81L146 900.98L145 898.51L144 898.27L143 910.36L142 903.13L141 911.95L140 899.81L139 895.99L138 910.92L137 909.93L136 899.65L135 899.91L134 897.77L133 906.29L132 899.57L131 896.11L130 895.53L129 907.02L128 895.17L127 898.33L126 896.71L125 909.97L124 898.27L123 895.31L122 901.5L121 895.39L120 903.81L119 896.15L118 895.84L117 906.79L116 904.38L115 910.25L114 906.95L113 901.95L112 903.5L111 901.64L110 897.87L109 895.75L108 897.56L107 895.52L106 895.6L105 902.19L104 895.77L103 895.78L102 898.05L101 906.34L100 898.09L99 897.07L98 900.15L97 909.8L96 903.38L95 902.37L94 901.81L93 897.1L92 902.95L91 901.91L90 898.33L89 901.76L88 901.37L87 911.56L86 895.94L85 899.74L84 896.02L83 896.01L82 896.07L81 901.29L80 896.25L79 899.17L78 912.59L77 896.29L76 907.55L75 896.32L74 900.8L73 911.9L72 898.32L71 906.76L70 899.06L69 899.57L68 913.67L67 897.43L66 897.32L65 898.38L64 907.03L63 907.1L62 914.31L61 907.65L60 914.62L59 914.51L58 904.23L57 901.17L56 901.2L55 899.87L54 903.19L53 900.22L52 899.81L51 904.37L50 915.45L49 899.62L48 905.66L47 899.84L46 899.85L45 904.17L44 907.72L43 906.5L42 904.79L41 909.3L40 900.4L39 903.07L38 902.72L37 902.93L36 900.01L35 908.88L34 899.53L33 908.88L32 899.54L31 909.52L30 911.08L29 903.83L28 899.87L27 898.53L26 907.13L25 906.65L24 898.6L23 900.94L22 897.91L21 908.11L20 903.68L19 904.94L18 911.59L17 904.89L16 906.19L15 900.04L14 901.85L13 899.02L12 896.97L11 906.68L10 896.34L9 899.67L8 896.17L7 896.91L6 903.53L5 910.41L4 896.54L3 911.14L2 897.24L1 895.84L0 912.08Z" fill="#adadad"/>
<g fill="#ffffff">
<path opacity="0.50" d="M3.08 617h1.7V1127.4h-1.7ZM52.35 617h1.7V1127.4h-1.7ZM101.63 617h1.7V1127.4h-1.7ZM150.9 617h1.7V1127.4h-1.7ZM200.18 617h1.7V1127.4h-1.7ZM249.45 617h1.7V1127.4h-1.7ZM298.72 617h1.7V1127.4h-1.7ZM348 617h1.7V1127.4h-1.7ZM397.27 617h1.7V1127.4h-1.7ZM446.55 617h1.7V1127.4h-1.7ZM495.82 617h1.7V1127.4h-1.7ZM545.09 617h1.7V1127.4h-1.7ZM594.37 617h1.7V1127.4h-1.7ZM643.64 617h1.7V1127.4h-1.7ZM692.92 617h1.7V1127.4h-1.7ZM742.19 617h1.7V1127.4h-1.7ZM791.46 617h1.7V1127.4h-1.7ZM840.74 617h1.7V1127.4h-1.7ZM890.01 617h1.7V1127.4h-1.7ZM939.29 617h1.7V1127.4h-1.7ZM988.56 617h1.7V1127.4h-1.7ZM1037.83 617h1.7V1127.4h-1.7ZM1087.11 617h1.7V1127.4h-1.7ZM1136.38 617h1.7V1127.4h-1.7ZM1185.66 617h1.7V1127.4h-1.7ZM1234.93 617h1.7V1127.4h-1.7ZM1284.2 617h1.7V1127.4h-1.7ZM1333.48 617h1.7V1127.4h-1.7ZM1382.75 617h1.7V1127.4h-1.7ZM1432.03 617h1.7V1127.4h-1.7ZM1481.3 617h1.7V1127.4h-1.7ZM1530.57 617h1.7V1127.4h-1.7ZM1579.85 617h1.7V1127.4h-1.7ZM1629.12 617h1.7V1127.4h-1.7ZM1678.4 617h1.7V1127.4h-1.7ZM1727.67 617h1.7V1127.4h-1.7ZM1776.94 617h1.7V1127.4h-1.7ZM1826.22 617h1.7V1127.4h-1.7ZM1875.49 617h1.7V1127.4h-1.7ZM1924.77 617h1.7V1127.4h-1.7ZM1974.04 617h1.7V1127.4h-1.7ZM2023.31 617h1.7V1127.4h-1.7ZM2072.59 617h1.7V1127.4h-1.7ZM2121.86 617h1.7V1127.4h-1.7ZM2171.14 617h1.7V1127.4h-1.7ZM2220.41 617h1.7V1127.4h-1.7ZM2269.68 617h1.7V1127.4h-1.7ZM2318.96 617h1.7V1127.4h-1.7ZM2368.23 617h1.7V1127.4h-1.7ZM2417.51 617h1.7V1127.4h-1.7ZM2466.78 617h1.7V1127.4h-1.7ZM2516.05 617h1.7V1127.4h-1.7ZM2565.33 617h1.7V1127.4h-1.7ZM2614.6 617h1.7V1127.4h-1.7ZM2663.88 617h1.7V1127.4h-1.7ZM2713.15 617h1.7V1127.4h-1.7ZM2762.42 617h1.7V1127.4h-1.7ZM2811.7 617h1.7V1127.4h-1.7ZM2860.97 617h1.7V1127.4h-1.7ZM2910.25 617h1.7V1127.4h-1.7ZM2959.52 617h1.7V1127.4h-1.7ZM3008.79 617h1.7V1127.4h-1.7ZM3058.07 617h1.7V1127.4h-1.7ZM3107.34 617h1.7V1127.4h-1.7ZM3156.62 617h1.7V1127.4h-1.7ZM3205.89 617h1.7V1127.4h-1.7ZM3255.16 617h1.7V1127.4h-1.7ZM3304.44 617h1.7V1127.4h-1.7ZM3353.71 617h1.7V1127.4h-1.7ZM3402.99 617h1.7V1127.4h-1.7ZM3452.26 617h1.7V1127.4h-1.7Z"/>
<path opacity="0.16" d="M15.5 617h1.5V1127.4h-1.5ZM27.82 617h1.5V1127.4h-1.5ZM40.14 617h1.5V1127.4h-1.5ZM64.77 617h1.5V1127.4h-1.5ZM77.09 617h1.5V1127.4h-1.5ZM89.41 617h1.5V1127.4h-1.5ZM114.05 617h1.5V1127.4h-1.5ZM126.37 617h1.5V1127.4h-1.5ZM138.68 617h1.5V1127.4h-1.5ZM163.32 617h1.5V1127.4h-1.5ZM175.64 617h1.5V1127.4h-1.5ZM187.96 617h1.5V1127.4h-1.5ZM212.59 617h1.5V1127.4h-1.5ZM224.91 617h1.5V1127.4h-1.5ZM237.23 617h1.5V1127.4h-1.5ZM261.87 617h1.5V1127.4h-1.5ZM274.19 617h1.5V1127.4h-1.5ZM286.51 617h1.5V1127.4h-1.5ZM311.14 617h1.5V1127.4h-1.5ZM323.46 617h1.5V1127.4h-1.5ZM335.78 617h1.5V1127.4h-1.5ZM360.42 617h1.5V1127.4h-1.5ZM372.74 617h1.5V1127.4h-1.5ZM385.05 617h1.5V1127.4h-1.5ZM409.69 617h1.5V1127.4h-1.5ZM422.01 617h1.5V1127.4h-1.5ZM434.33 617h1.5V1127.4h-1.5ZM458.96 617h1.5V1127.4h-1.5ZM471.28 617h1.5V1127.4h-1.5ZM483.6 617h1.5V1127.4h-1.5ZM508.24 617h1.5V1127.4h-1.5ZM520.56 617h1.5V1127.4h-1.5ZM532.88 617h1.5V1127.4h-1.5ZM557.51 617h1.5V1127.4h-1.5ZM569.83 617h1.5V1127.4h-1.5ZM582.15 617h1.5V1127.4h-1.5ZM606.79 617h1.5V1127.4h-1.5ZM619.1 617h1.5V1127.4h-1.5ZM631.42 617h1.5V1127.4h-1.5ZM656.06 617h1.5V1127.4h-1.5ZM668.38 617h1.5V1127.4h-1.5ZM680.7 617h1.5V1127.4h-1.5ZM705.33 617h1.5V1127.4h-1.5ZM717.65 617h1.5V1127.4h-1.5ZM729.97 617h1.5V1127.4h-1.5ZM754.61 617h1.5V1127.4h-1.5ZM766.93 617h1.5V1127.4h-1.5ZM779.25 617h1.5V1127.4h-1.5ZM803.88 617h1.5V1127.4h-1.5ZM816.2 617h1.5V1127.4h-1.5ZM828.52 617h1.5V1127.4h-1.5ZM853.16 617h1.5V1127.4h-1.5ZM865.48 617h1.5V1127.4h-1.5ZM877.79 617h1.5V1127.4h-1.5ZM902.43 617h1.5V1127.4h-1.5ZM914.75 617h1.5V1127.4h-1.5ZM927.07 617h1.5V1127.4h-1.5ZM951.7 617h1.5V1127.4h-1.5ZM964.02 617h1.5V1127.4h-1.5ZM976.34 617h1.5V1127.4h-1.5ZM1000.98 617h1.5V1127.4h-1.5ZM1013.3 617h1.5V1127.4h-1.5ZM1025.62 617h1.5V1127.4h-1.5ZM1050.25 617h1.5V1127.4h-1.5ZM1062.57 617h1.5V1127.4h-1.5ZM1074.89 617h1.5V1127.4h-1.5ZM1099.53 617h1.5V1127.4h-1.5ZM1111.85 617h1.5V1127.4h-1.5ZM1124.16 617h1.5V1127.4h-1.5ZM1148.8 617h1.5V1127.4h-1.5ZM1161.12 617h1.5V1127.4h-1.5ZM1173.44 617h1.5V1127.4h-1.5ZM1198.07 617h1.5V1127.4h-1.5ZM1210.39 617h1.5V1127.4h-1.5ZM1222.71 617h1.5V1127.4h-1.5ZM1247.35 617h1.5V1127.4h-1.5ZM1259.67 617h1.5V1127.4h-1.5ZM1271.99 617h1.5V1127.4h-1.5ZM1296.62 617h1.5V1127.4h-1.5ZM1308.94 617h1.5V1127.4h-1.5ZM1321.26 617h1.5V1127.4h-1.5ZM1345.9 617h1.5V1127.4h-1.5ZM1358.22 617h1.5V1127.4h-1.5ZM1370.53 617h1.5V1127.4h-1.5ZM1395.17 617h1.5V1127.4h-1.5ZM1407.49 617h1.5V1127.4h-1.5ZM1419.81 617h1.5V1127.4h-1.5ZM1444.44 617h1.5V1127.4h-1.5ZM1456.76 617h1.5V1127.4h-1.5ZM1469.08 617h1.5V1127.4h-1.5ZM1493.72 617h1.5V1127.4h-1.5ZM1506.04 617h1.5V1127.4h-1.5ZM1518.36 617h1.5V1127.4h-1.5ZM1542.99 617h1.5V1127.4h-1.5ZM1555.31 617h1.5V1127.4h-1.5ZM1567.63 617h1.5V1127.4h-1.5ZM1592.27 617h1.5V1127.4h-1.5ZM1604.59 617h1.5V1127.4h-1.5ZM1616.9 617h1.5V1127.4h-1.5ZM1641.54 617h1.5V1127.4h-1.5ZM1653.86 617h1.5V1127.4h-1.5ZM1666.18 617h1.5V1127.4h-1.5ZM1690.81 617h1.5V1127.4h-1.5ZM1703.13 617h1.5V1127.4h-1.5ZM1715.45 617h1.5V1127.4h-1.5ZM1740.09 617h1.5V1127.4h-1.5ZM1752.41 617h1.5V1127.4h-1.5ZM1764.73 617h1.5V1127.4h-1.5ZM1789.36 617h1.5V1127.4h-1.5ZM1801.68 617h1.5V1127.4h-1.5ZM1814 617h1.5V1127.4h-1.5ZM1838.64 617h1.5V1127.4h-1.5ZM1850.96 617h1.5V1127.4h-1.5ZM1863.27 617h1.5V1127.4h-1.5ZM1887.91 617h1.5V1127.4h-1.5ZM1900.23 617h1.5V1127.4h-1.5ZM1912.55 617h1.5V1127.4h-1.5ZM1937.18 617h1.5V1127.4h-1.5ZM1949.5 617h1.5V1127.4h-1.5ZM1961.82 617h1.5V1127.4h-1.5ZM1986.46 617h1.5V1127.4h-1.5ZM1998.78 617h1.5V1127.4h-1.5ZM2011.1 617h1.5V1127.4h-1.5ZM2035.73 617h1.5V1127.4h-1.5ZM2048.05 617h1.5V1127.4h-1.5ZM2060.37 617h1.5V1127.4h-1.5ZM2085.01 617h1.5V1127.4h-1.5ZM2097.32 617h1.5V1127.4h-1.5ZM2109.64 617h1.5V1127.4h-1.5ZM2134.28 617h1.5V1127.4h-1.5ZM2146.6 617h1.5V1127.4h-1.5ZM2158.92 617h1.5V1127.4h-1.5ZM2183.55 617h1.5V1127.4h-1.5ZM2195.87 617h1.5V1127.4h-1.5ZM2208.19 617h1.5V1127.4h-1.5ZM2232.83 617h1.5V1127.4h-1.5ZM2245.15 617h1.5V1127.4h-1.5ZM2257.47 617h1.5V1127.4h-1.5ZM2282.1 617h1.5V1127.4h-1.5ZM2294.42 617h1.5V1127.4h-1.5ZM2306.74 617h1.5V1127.4h-1.5ZM2331.38 617h1.5V1127.4h-1.5ZM2343.69 617h1.5V1127.4h-1.5ZM2356.01 617h1.5V1127.4h-1.5ZM2380.65 617h1.5V1127.4h-1.5ZM2392.97 617h1.5V1127.4h-1.5ZM2405.29 617h1.5V1127.4h-1.5ZM2429.92 617h1.5V1127.4h-1.5ZM2442.24 617h1.5V1127.4h-1.5ZM2454.56 617h1.5V1127.4h-1.5ZM2479.2 617h1.5V1127.4h-1.5ZM2491.52 617h1.5V1127.4h-1.5ZM2503.84 617h1.5V1127.4h-1.5ZM2528.47 617h1.5V1127.4h-1.5ZM2540.79 617h1.5V1127.4h-1.5ZM2553.11 617h1.5V1127.4h-1.5ZM2577.75 617h1.5V1127.4h-1.5ZM2590.07 617h1.5V1127.4h-1.5ZM2602.38 617h1.5V1127.4h-1.5ZM2627.02 617h1.5V1127.4h-1.5ZM2639.34 617h1.5V1127.4h-1.5ZM2651.66 617h1.5V1127.4h-1.5ZM2676.29 617h1.5V1127.4h-1.5ZM2688.61 617h1.5V1127.4h-1.5ZM2700.93 617h1.5V1127.4h-1.5ZM2725.57 617h1.5V1127.4h-1.5ZM2737.89 617h1.5V1127.4h-1.5ZM2750.21 617h1.5V1127.4h-1.5ZM2774.84 617h1.5V1127.4h-1.5ZM2787.16 617h1.5V1127.4h-1.5ZM2799.48 617h1.5V1127.4h-1.5ZM2824.12 617h1.5V1127.4h-1.5ZM2836.43 617h1.5V1127.4h-1.5ZM2848.75 617h1.5V1127.4h-1.5ZM2873.39 617h1.5V1127.4h-1.5ZM2885.71 617h1.5V1127.4h-1.5ZM2898.03 617h1.5V1127.4h-1.5ZM2922.66 617h1.5V1127.4h-1.5ZM2934.98 617h1.5V1127.4h-1.5ZM2947.3 617h1.5V1127.4h-1.5ZM2971.94 617h1.5V1127.4h-1.5ZM2984.26 617h1.5V1127.4h-1.5ZM2996.58 617h1.5V1127.4h-1.5ZM3021.21 617h1.5V1127.4h-1.5ZM3033.53 617h1.5V1127.4h-1.5ZM3045.85 617h1.5V1127.4h-1.5ZM3070.49 617h1.5V1127.4h-1.5ZM3082.8 617h1.5V1127.4h-1.5ZM3095.12 617h1.5V1127.4h-1.5ZM3119.76 617h1.5V1127.4h-1.5ZM3132.08 617h1.5V1127.4h-1.5ZM3144.4 617h1.5V1127.4h-1.5ZM3169.03 617h1.5V1127.4h-1.5ZM3181.35 617h1.5V1127.4h-1.5ZM3193.67 617h1.5V1127.4h-1.5ZM3218.31 617h1.5V1127.4h-1.5ZM3230.63 617h1.5V1127.4h-1.5ZM3242.95 617h1.5V1127.4h-1.5ZM3267.58 617h1.5V1127.4h-1.5ZM3279.9 617h1.5V1127.4h-1.5ZM3292.22 617h1.5V1127.4h-1.5ZM3316.86 617h1.5V1127.4h-1.5ZM3329.17 617h1.5V1127.4h-1.5ZM3341.49 617h1.5V1127.4h-1.5ZM3366.13 617h1.5V1127.4h-1.5ZM3378.45 617h1.5V1127.4h-1.5ZM3390.77 617h1.5V1127.4h-1.5ZM3415.4 617h1.5V1127.4h-1.5ZM3427.72 617h1.5V1127.4h-1.5ZM3440.04 617h1.5V1127.4h-1.5Z"/>
</g>
<rect x="0.5" y="1144.4" width="3455" height="1.2" fill="#46474a" />
<rect x="0.5" y="1145.6" width="3455" height="24.4" fill="#151618" />
<rect x="0.5" y="1170" width="3455" height="1.2" fill="#2c2d2f" />
<path d="M115.7 573.5 L134 573.5 L128 579.5 L128 1170 L121 1170 L121 579.5 Z" fill="#ffffff"/>
<circle cx="55.5" cy="1228.2" r="19.7" fill="#141517" stroke="#0c0d0e" stroke-width="1.2"/>
<text transform="translate(48.16 1236.7) scale(0.9785 1)" font-size="22.57" font-weight="normal" fill="#828282" >S</text>
<rect x="52.8" y="1261" width="5.4" height="68.8" fill="#000000" />
<rect x="52.8" y="1341.7" width="5.4" height="720.9" fill="#000000" />
<rect x="130.8" y="1208" width="9.2" height="854.6" rx="4.6" fill="#000000" />
<path fill="#4d4e4f" d="M89.1 1302.1h18.9v3h-18.9ZM162.8 1302.1h18.9v3h-18.9ZM89.1 1382.5h33.8v3h-33.8ZM147.9 1382.5h33.8v3h-33.8ZM89.1 1469.7h18.9v3h-18.9ZM162.8 1469.7h18.9v3h-18.9ZM89.1 1549.8h33.8v3h-33.8ZM147.9 1549.8h33.8v3h-33.8ZM89.1 1633.7h18.9v3h-18.9ZM162.8 1633.7h18.9v3h-18.9ZM89.1 1718h33.8v3h-33.8ZM147.9 1718h33.8v3h-33.8ZM89.1 1798.2h18.9v3h-18.9ZM162.8 1798.2h18.9v3h-18.9ZM89.1 1882h33.8v3h-33.8ZM147.9 1882h33.8v3h-33.8ZM89.1 1966.5h18.9v3h-18.9ZM162.8 1966.5h18.9v3h-18.9ZM89.1 2047h33.8v3h-33.8ZM147.9 2047h33.8v3h-33.8Z"/>
<rect x="89.5" y="1218.7" width="91.7" height="64" rx="8" fill="#000" opacity="0.45" filter="url(#kshadow)"/>
<rect x="89.5" y="1217.7" width="91.7" height="62.5" rx="7" fill="url(#knobg)" stroke="#0c0d0e" stroke-width="1.2"/>
<path fill="#242527" opacity="0.8" d="M95.5 1223.7h80v0.9h-80ZM95.5 1228h80v0.9h-80ZM95.5 1232.3h80v0.9h-80ZM95.5 1236.6h80v0.9h-80ZM95.5 1240.9h80v0.9h-80ZM95.5 1245.2h80v0.9h-80ZM95.5 1249.5h80v0.9h-80ZM95.5 1253.8h80v0.9h-80ZM95.5 1258.1h80v0.9h-80ZM95.5 1262.4h80v0.9h-80ZM95.5 1266.7h80v0.9h-80ZM95.5 1271h80v0.9h-80ZM95.5 1275.3h80v0.9h-80Z"/>
<rect x="94.5" y="1247.1" width="81.8" height="3.6" fill="url(#wline)"/>
<text transform="translate(101.85 2113.6) scale(1.0374 1)" font-size="24.64" font-weight="normal" fill="#ffffff" stroke="#ffffff" stroke-width="0.55" stroke-linejoin="round" >String</text>
<circle cx="234.16" cy="1228.2" r="19.7" fill="#141517" stroke="#0c0d0e" stroke-width="1.2"/>
<text transform="translate(226.82 1236.7) scale(0.9785 1)" font-size="22.57" font-weight="normal" fill="#828282" >S</text>
<rect x="231.46" y="1261" width="5.4" height="68.8" fill="#000000" />
<rect x="231.46" y="1341.7" width="5.4" height="720.9" fill="#000000" />
<rect x="309.46" y="1208" width="9.2" height="854.6" rx="4.6" fill="#000000" />
<path fill="#4d4e4f" d="M267.76 1302.1h18.9v3h-18.9ZM341.46 1302.1h18.9v3h-18.9ZM267.76 1382.5h33.8v3h-33.8ZM326.56 1382.5h33.8v3h-33.8ZM267.76 1469.7h18.9v3h-18.9ZM341.46 1469.7h18.9v3h-18.9ZM267.76 1549.8h33.8v3h-33.8ZM326.56 1549.8h33.8v3h-33.8ZM267.76 1633.7h18.9v3h-18.9ZM341.46 1633.7h18.9v3h-18.9ZM267.76 1718h33.8v3h-33.8ZM326.56 1718h33.8v3h-33.8ZM267.76 1798.2h18.9v3h-18.9ZM341.46 1798.2h18.9v3h-18.9ZM267.76 1882h33.8v3h-33.8ZM326.56 1882h33.8v3h-33.8ZM267.76 1966.5h18.9v3h-18.9ZM341.46 1966.5h18.9v3h-18.9ZM267.76 2047h33.8v3h-33.8ZM326.56 2047h33.8v3h-33.8Z"/>
<rect x="268.16" y="1212.5" width="91.7" height="64" rx="8" fill="#000" opacity="0.45" filter="url(#kshadow)"/>
<rect x="268.16" y="1211.5" width="91.7" height="62.5" rx="7" fill="url(#knobg)" stroke="#0c0d0e" stroke-width="1.2"/>
<path fill="#242527" opacity="0.8" d="M274.16 1217.5h80v0.9h-80ZM274.16 1221.8h80v0.9h-80ZM274.16 1226.1h80v0.9h-80ZM274.16 1230.4h80v0.9h-80ZM274.16 1234.7h80v0.9h-80ZM274.16 1239h80v0.9h-80ZM274.16 1243.3h80v0.9h-80ZM274.16 1247.6h80v0.9h-80ZM274.16 1251.9h80v0.9h-80ZM274.16 1256.2h80v0.9h-80ZM274.16 1260.5h80v0.9h-80ZM274.16 1264.8h80v0.9h-80ZM274.16 1269.1h80v0.9h-80Z"/>
<rect x="273.16" y="1240.9" width="81.8" height="3.6" fill="url(#wline)"/>
<text transform="translate(269.78 2113.6) scale(1.0090 1)" font-size="24.64" font-weight="normal" fill="#ffffff" stroke="#ffffff" stroke-width="0.55" stroke-linejoin="round" >Surface</text>
<circle cx="412.82" cy="1228.2" r="19.7" fill="#141517" stroke="#0c0d0e" stroke-width="1.2"/>
<text transform="translate(405.48 1236.7) scale(0.9785 1)" font-size="22.57" font-weight="normal" fill="#828282" >S</text>
<rect x="410.12" y="1261" width="5.4" height="68.8" fill="#000000" />
<rect x="410.12" y="1341.7" width="5.4" height="720.9" fill="#000000" />
<rect x="488.12" y="1208" width="9.2" height="854.6" rx="4.6" fill="#000000" />
<path fill="#4d4e4f" d="M446.42 1302.1h18.9v3h-18.9ZM520.12 1302.1h18.9v3h-18.9ZM446.42 1382.5h33.8v3h-33.8ZM505.22 1382.5h33.8v3h-33.8ZM446.42 1469.7h18.9v3h-18.9ZM520.12 1469.7h18.9v3h-18.9ZM446.42 1549.8h33.8v3h-33.8ZM505.22 1549.8h33.8v3h-33.8ZM446.42 1633.7h18.9v3h-18.9ZM520.12 1633.7h18.9v3h-18.9ZM446.42 1718h33.8v3h-33.8ZM505.22 1718h33.8v3h-33.8ZM446.42 1798.2h18.9v3h-18.9ZM520.12 1798.2h18.9v3h-18.9ZM446.42 1882h33.8v3h-33.8ZM505.22 1882h33.8v3h-33.8ZM446.42 1966.5h18.9v3h-18.9ZM520.12 1966.5h18.9v3h-18.9ZM446.42 2047h33.8v3h-33.8ZM505.22 2047h33.8v3h-33.8Z"/>
<rect x="446.82" y="1212.5" width="91.7" height="64" rx="8" fill="#000" opacity="0.45" filter="url(#kshadow)"/>
<rect x="446.82" y="1211.5" width="91.7" height="62.5" rx="7" fill="url(#knobg)" stroke="#0c0d0e" stroke-width="1.2"/>
<path fill="#242527" opacity="0.8" d="M452.82 1217.5h80v0.9h-80ZM452.82 1221.8h80v0.9h-80ZM452.82 1226.1h80v0.9h-80ZM452.82 1230.4h80v0.9h-80ZM452.82 1234.7h80v0.9h-80ZM452.82 1239h80v0.9h-80ZM452.82 1243.3h80v0.9h-80ZM452.82 1247.6h80v0.9h-80ZM452.82 1251.9h80v0.9h-80ZM452.82 1256.2h80v0.9h-80ZM452.82 1260.5h80v0.9h-80ZM452.82 1264.8h80v0.9h-80ZM452.82 1269.1h80v0.9h-80Z"/>
<rect x="451.82" y="1240.9" width="81.8" height="3.6" fill="url(#wline)"/>
<text transform="translate(445.34 2113.6) scale(0.9933 1)" font-size="24.64" font-weight="normal" fill="#ffffff" stroke="#ffffff" stroke-width="0.55" stroke-linejoin="round" >PadHigh</text>
<circle cx="591.48" cy="1228.2" r="19.7" fill="#141517" stroke="#0c0d0e" stroke-width="1.2"/>
<text transform="translate(584.14 1236.7) scale(0.9785 1)" font-size="22.57" font-weight="normal" fill="#828282" >S</text>
<rect x="588.78" y="1261" width="5.4" height="68.8" fill="#000000" />
<rect x="588.78" y="1341.7" width="5.4" height="720.9" fill="#000000" />
<rect x="666.78" y="1208" width="9.2" height="854.6" rx="4.6" fill="#000000" />
<path fill="#4d4e4f" d="M625.08 1302.1h18.9v3h-18.9ZM698.78 1302.1h18.9v3h-18.9ZM625.08 1382.5h33.8v3h-33.8ZM683.88 1382.5h33.8v3h-33.8ZM625.08 1469.7h18.9v3h-18.9ZM698.78 1469.7h18.9v3h-18.9ZM625.08 1549.8h33.8v3h-33.8ZM683.88 1549.8h33.8v3h-33.8ZM625.08 1633.7h18.9v3h-18.9ZM698.78 1633.7h18.9v3h-18.9ZM625.08 1718h33.8v3h-33.8ZM683.88 1718h33.8v3h-33.8ZM625.08 1798.2h18.9v3h-18.9ZM698.78 1798.2h18.9v3h-18.9ZM625.08 1882h33.8v3h-33.8ZM683.88 1882h33.8v3h-33.8ZM625.08 1966.5h18.9v3h-18.9ZM698.78 1966.5h18.9v3h-18.9ZM625.08 2047h33.8v3h-33.8ZM683.88 2047h33.8v3h-33.8Z"/>
<rect x="625.48" y="1212.5" width="91.7" height="64" rx="8" fill="#000" opacity="0.45" filter="url(#kshadow)"/>
<rect x="625.48" y="1211.5" width="91.7" height="62.5" rx="7" fill="url(#knobg)" stroke="#0c0d0e" stroke-width="1.2"/>
<path fill="#242527" opacity="0.8" d="M631.48 1217.5h80v0.9h-80ZM631.48 1221.8h80v0.9h-80ZM631.48 1226.1h80v0.9h-80ZM631.48 1230.4h80v0.9h-80ZM631.48 1234.7h80v0.9h-80ZM631.48 1239h80v0.9h-80ZM631.48 1243.3h80v0.9h-80ZM631.48 1247.6h80v0.9h-80ZM631.48 1251.9h80v0.9h-80ZM631.48 1256.2h80v0.9h-80ZM631.48 1260.5h80v0.9h-80ZM631.48 1264.8h80v0.9h-80ZM631.48 1269.1h80v0.9h-80Z"/>
<rect x="630.48" y="1240.9" width="81.8" height="3.6" fill="url(#wline)"/>
<text transform="translate(651.89 2113.6) scale(0.9319 1)" font-size="24.64" font-weight="normal" fill="#ffffff" stroke="#ffffff" stroke-width="0.55" stroke-linejoin="round" >Vox</text>
<circle cx="770.14" cy="1228.2" r="19.7" fill="#141517" stroke="#0c0d0e" stroke-width="1.2"/>
<text transform="translate(762.8 1236.7) scale(0.9785 1)" font-size="22.57" font-weight="normal" fill="#828282" >S</text>
<rect x="767.44" y="1261" width="5.4" height="68.8" fill="#000000" />
<rect x="767.44" y="1341.7" width="5.4" height="720.9" fill="#000000" />
<rect x="845.44" y="1208" width="9.2" height="854.6" rx="4.6" fill="#000000" />
<path fill="#4d4e4f" d="M803.74 1302.1h18.9v3h-18.9ZM877.44 1302.1h18.9v3h-18.9ZM803.74 1382.5h33.8v3h-33.8ZM862.54 1382.5h33.8v3h-33.8ZM803.74 1469.7h18.9v3h-18.9ZM877.44 1469.7h18.9v3h-18.9ZM803.74 1549.8h33.8v3h-33.8ZM862.54 1549.8h33.8v3h-33.8ZM803.74 1633.7h18.9v3h-18.9ZM877.44 1633.7h18.9v3h-18.9ZM803.74 1718h33.8v3h-33.8ZM862.54 1718h33.8v3h-33.8ZM803.74 1798.2h18.9v3h-18.9ZM877.44 1798.2h18.9v3h-18.9ZM803.74 1882h33.8v3h-33.8ZM862.54 1882h33.8v3h-33.8ZM803.74 1966.5h18.9v3h-18.9ZM877.44 1966.5h18.9v3h-18.9ZM803.74 2047h33.8v3h-33.8ZM862.54 2047h33.8v3h-33.8Z"/>
<rect x="804.14" y="1212.5" width="91.7" height="64" rx="8" fill="#000" opacity="0.45" filter="url(#kshadow)"/>
<rect x="804.14" y="1211.5" width="91.7" height="62.5" rx="7" fill="url(#knobg)" stroke="#0c0d0e" stroke-width="1.2"/>
<path fill="#242527" opacity="0.8" d="M810.14 1217.5h80v0.9h-80ZM810.14 1221.8h80v0.9h-80ZM810.14 1226.1h80v0.9h-80ZM810.14 1230.4h80v0.9h-80ZM810.14 1234.7h80v0.9h-80ZM810.14 1239h80v0.9h-80ZM810.14 1243.3h80v0.9h-80ZM810.14 1247.6h80v0.9h-80ZM810.14 1251.9h80v0.9h-80ZM810.14 1256.2h80v0.9h-80ZM810.14 1260.5h80v0.9h-80ZM810.14 1264.8h80v0.9h-80ZM810.14 1269.1h80v0.9h-80Z"/>
<rect x="809.14" y="1240.9" width="81.8" height="3.6" fill="url(#wline)"/>
<text transform="translate(806.78 2113.6) scale(0.9737 1)" font-size="24.64" font-weight="normal" fill="#ffffff" stroke="#ffffff" stroke-width="0.55" stroke-linejoin="round" >Vox Swi</text>
<circle cx="948.8" cy="1228.2" r="19.7" fill="#141517" stroke="#0c0d0e" stroke-width="1.2"/>
<text transform="translate(941.46 1236.7) scale(0.9785 1)" font-size="22.57" font-weight="normal" fill="#828282" >S</text>
<rect x="946.1" y="1261" width="5.4" height="68.8" fill="#000000" />
<rect x="946.1" y="1341.7" width="5.4" height="720.9" fill="#000000" />
<rect x="1024.1" y="1208" width="9.2" height="854.6" rx="4.6" fill="#000000" />
<path fill="#4d4e4f" d="M982.4 1302.1h18.9v3h-18.9ZM1056.1 1302.1h18.9v3h-18.9ZM982.4 1382.5h33.8v3h-33.8ZM1041.2 1382.5h33.8v3h-33.8ZM982.4 1469.7h18.9v3h-18.9ZM1056.1 1469.7h18.9v3h-18.9ZM982.4 1549.8h33.8v3h-33.8ZM1041.2 1549.8h33.8v3h-33.8ZM982.4 1633.7h18.9v3h-18.9ZM1056.1 1633.7h18.9v3h-18.9ZM982.4 1718h33.8v3h-33.8ZM1041.2 1718h33.8v3h-33.8ZM982.4 1798.2h18.9v3h-18.9ZM1056.1 1798.2h18.9v3h-18.9ZM982.4 1882h33.8v3h-33.8ZM1041.2 1882h33.8v3h-33.8ZM982.4 1966.5h18.9v3h-18.9ZM1056.1 1966.5h18.9v3h-18.9ZM982.4 2047h33.8v3h-33.8ZM1041.2 2047h33.8v3h-33.8Z"/>
<rect x="982.8" y="1212.5" width="91.7" height="64" rx="8" fill="#000" opacity="0.45" filter="url(#kshadow)"/>
<rect x="982.8" y="1211.5" width="91.7" height="62.5" rx="7" fill="url(#knobg)" stroke="#0c0d0e" stroke-width="1.2"/>
<path fill="#242527" opacity="0.8" d="M988.8 1217.5h80v0.9h-80ZM988.8 1221.8h80v0.9h-80ZM988.8 1226.1h80v0.9h-80ZM988.8 1230.4h80v0.9h-80ZM988.8 1234.7h80v0.9h-80ZM988.8 1239h80v0.9h-80ZM988.8 1243.3h80v0.9h-80ZM988.8 1247.6h80v0.9h-80ZM988.8 1251.9h80v0.9h-80ZM988.8 1256.2h80v0.9h-80ZM988.8 1260.5h80v0.9h-80ZM988.8 1264.8h80v0.9h-80ZM988.8 1269.1h80v0.9h-80Z"/>
<rect x="987.8" y="1240.9" width="81.8" height="3.6" fill="url(#wline)"/>
<text transform="translate(981.72 2113.6) scale(0.9554 1)" font-size="24.64" font-weight="normal" fill="#ffffff" stroke="#ffffff" stroke-width="0.55" stroke-linejoin="round" >Pad Low</text>
<rect x="3084" y="1171.2" width="10" height="988.8" fill="#1c1d1f" />
<rect x="3095.2" y="1171.2" width="2.8" height="988.8" fill="#1d1e20" />
<rect x="3094" y="1171.2" width="1.2" height="988.8" fill="#2a2b2d" />
<rect x="3130.2" y="1195.4" width="98" height="82.6" rx="6" fill="#131416" stroke="#0b0c0d" stroke-width="1.2" />
<rect x="3130.2" y="1298.8" width="98" height="82.2" rx="6" fill="#131416" stroke="#0b0c0d" stroke-width="1.2" />
<rect x="3130.2" y="1401.8" width="98" height="82.2" rx="6" fill="#131416" stroke="#0b0c0d" stroke-width="1.2" />
<rect x="3130.2" y="1523.3" width="98" height="82.6" rx="6" fill="#131416" stroke="#0b0c0d" stroke-width="1.2" />
<rect x="3130.2" y="1626.4" width="98" height="82.3" rx="6" fill="#1a1b1d" stroke="#0b0c0d" stroke-width="1.2" />
<rect x="3130.2" y="1729.5" width="98" height="82.6" rx="6" fill="#1a1b1d" stroke="#0b0c0d" stroke-width="1.2" />
<line x1="3160.1" y1="1219" x2="3160.1" y2="1257" stroke="#f2f2f2" stroke-width="2.6" stroke-linecap="round"/>
<rect x="3152.6" y="1233" width="15" height="5.6" rx="2.8" fill="#131416" stroke="#f2f2f2" stroke-width="2.4"/>
<line x1="3179.3" y1="1219" x2="3179.3" y2="1257" stroke="#f2f2f2" stroke-width="2.6" stroke-linecap="round"/>
<rect x="3171.8" y="1242.8" width="15" height="5.6" rx="2.8" fill="#131416" stroke="#f2f2f2" stroke-width="2.4"/>
<line x1="3198.3" y1="1219" x2="3198.3" y2="1257" stroke="#f2f2f2" stroke-width="2.6" stroke-linecap="round"/>
<rect x="3190.8" y="1224.2" width="15" height="5.6" rx="2.8" fill="#131416" stroke="#f2f2f2" stroke-width="2.4"/>
<text transform="translate(3145 1347.8) scale(0.9509 1)" font-size="21" font-weight="normal" fill="#9a9a9a" >BUSES</text>
<text transform="translate(3158.35 1438.8) scale(0.9758 1)" font-size="21.16" font-weight="normal" fill="#9a9a9a" >PAD</text>
<text transform="translate(3140.41 1463.6) scale(0.9376 1)" font-size="21.16" font-weight="normal" fill="#9a9a9a" >PLAYER</text>
<text transform="translate(3146.11 1560.3) scale(0.9125 1)" font-size="21.74" font-weight="normal" fill="#8e8e8e" letter-spacing="2.61" >MUTE</text>
<text transform="translate(3153.3 1584.9) scale(0.9604 1)" font-size="20.87" font-weight="normal" fill="#8e8e8e" letter-spacing="2.5" >MIDI</text>
<path d="M3166.8 1678.2 A10.3 10.3 0 0 1 3169.5 1658 H3188.7 A10.3 10.3 0 0 1 3188.7 1678.6 H3182" fill="none" stroke="#4c4d4e" stroke-width="3"/>
<path d="M3175.2 1762.3 A10 10 0 1 0 3177.1 1778.1 C3179 1776.2 3179.5 1765.8 3181.4 1763.9 A10 10 0 1 1 3183.5 1779.7" fill="none" stroke="#4c4d4e" stroke-width="3"/>
<rect x="3253.8" y="1194.9" width="6.2" height="76" fill="#000000" />
<rect x="3253.8" y="1284.4" width="6.2" height="800" fill="#000000" />
<rect x="3284.9" y="1194.9" width="6.1" height="76" fill="#000000" />
<rect x="3284.9" y="1284.4" width="6.1" height="800" fill="#000000" />
<rect x="3357.2" y="1194" width="8.6" height="890.4" rx="4.3" fill="#000000" />
<path fill="#4d4e4f" d="M3315.2 1291.8h18.9v3h-18.9ZM3388.9 1291.8h18.9v3h-18.9ZM3315.2 1375.5h33.8v3h-33.8ZM3374 1375.5h33.8v3h-33.8ZM3315.2 1466.5h18.9v3h-18.9ZM3388.9 1466.5h18.9v3h-18.9ZM3315.2 1549.8h33.8v3h-33.8ZM3374 1549.8h33.8v3h-33.8ZM3315.2 1637.3h18.9v3h-18.9ZM3388.9 1637.3h18.9v3h-18.9ZM3315.2 1724.8h33.8v3h-33.8ZM3374 1724.8h33.8v3h-33.8ZM3315.2 1808.7h18.9v3h-18.9ZM3388.9 1808.7h18.9v3h-18.9ZM3315.2 1896.2h33.8v3h-33.8ZM3374 1896.2h33.8v3h-33.8ZM3315.2 1983.7h18.9v3h-18.9ZM3388.9 1983.7h18.9v3h-18.9ZM3315.2 2067.1h33.8v3h-33.8ZM3374 2067.1h33.8v3h-33.8Z"/>
<rect x="3315.6" y="1198.8" width="91.7" height="64" rx="8" fill="#000" opacity="0.45" filter="url(#kshadow)"/>
<rect x="3315.6" y="1197.8" width="91.7" height="62.5" rx="7" fill="url(#knobg)" stroke="#0c0d0e" stroke-width="1.2"/>
<path fill="#242527" opacity="0.8" d="M3321.6 1203.8h80v0.9h-80ZM3321.6 1208.1h80v0.9h-80ZM3321.6 1212.4h80v0.9h-80ZM3321.6 1216.7h80v0.9h-80ZM3321.6 1221h80v0.9h-80ZM3321.6 1225.3h80v0.9h-80ZM3321.6 1229.6h80v0.9h-80ZM3321.6 1233.9h80v0.9h-80ZM3321.6 1238.2h80v0.9h-80ZM3321.6 1242.5h80v0.9h-80ZM3321.6 1246.8h80v0.9h-80ZM3321.6 1251.1h80v0.9h-80ZM3321.6 1255.4h80v0.9h-80Z"/>
<rect x="3320.6" y="1227.2" width="81.8" height="3.6" fill="url(#bline)"/>
<text transform="translate(3321.99 2134) scale(1.0188 1)" font-size="24.64" font-weight="normal" fill="#ffffff" stroke="#ffffff" stroke-width="0.55" stroke-linejoin="round" >Master</text></svg></body></html>
